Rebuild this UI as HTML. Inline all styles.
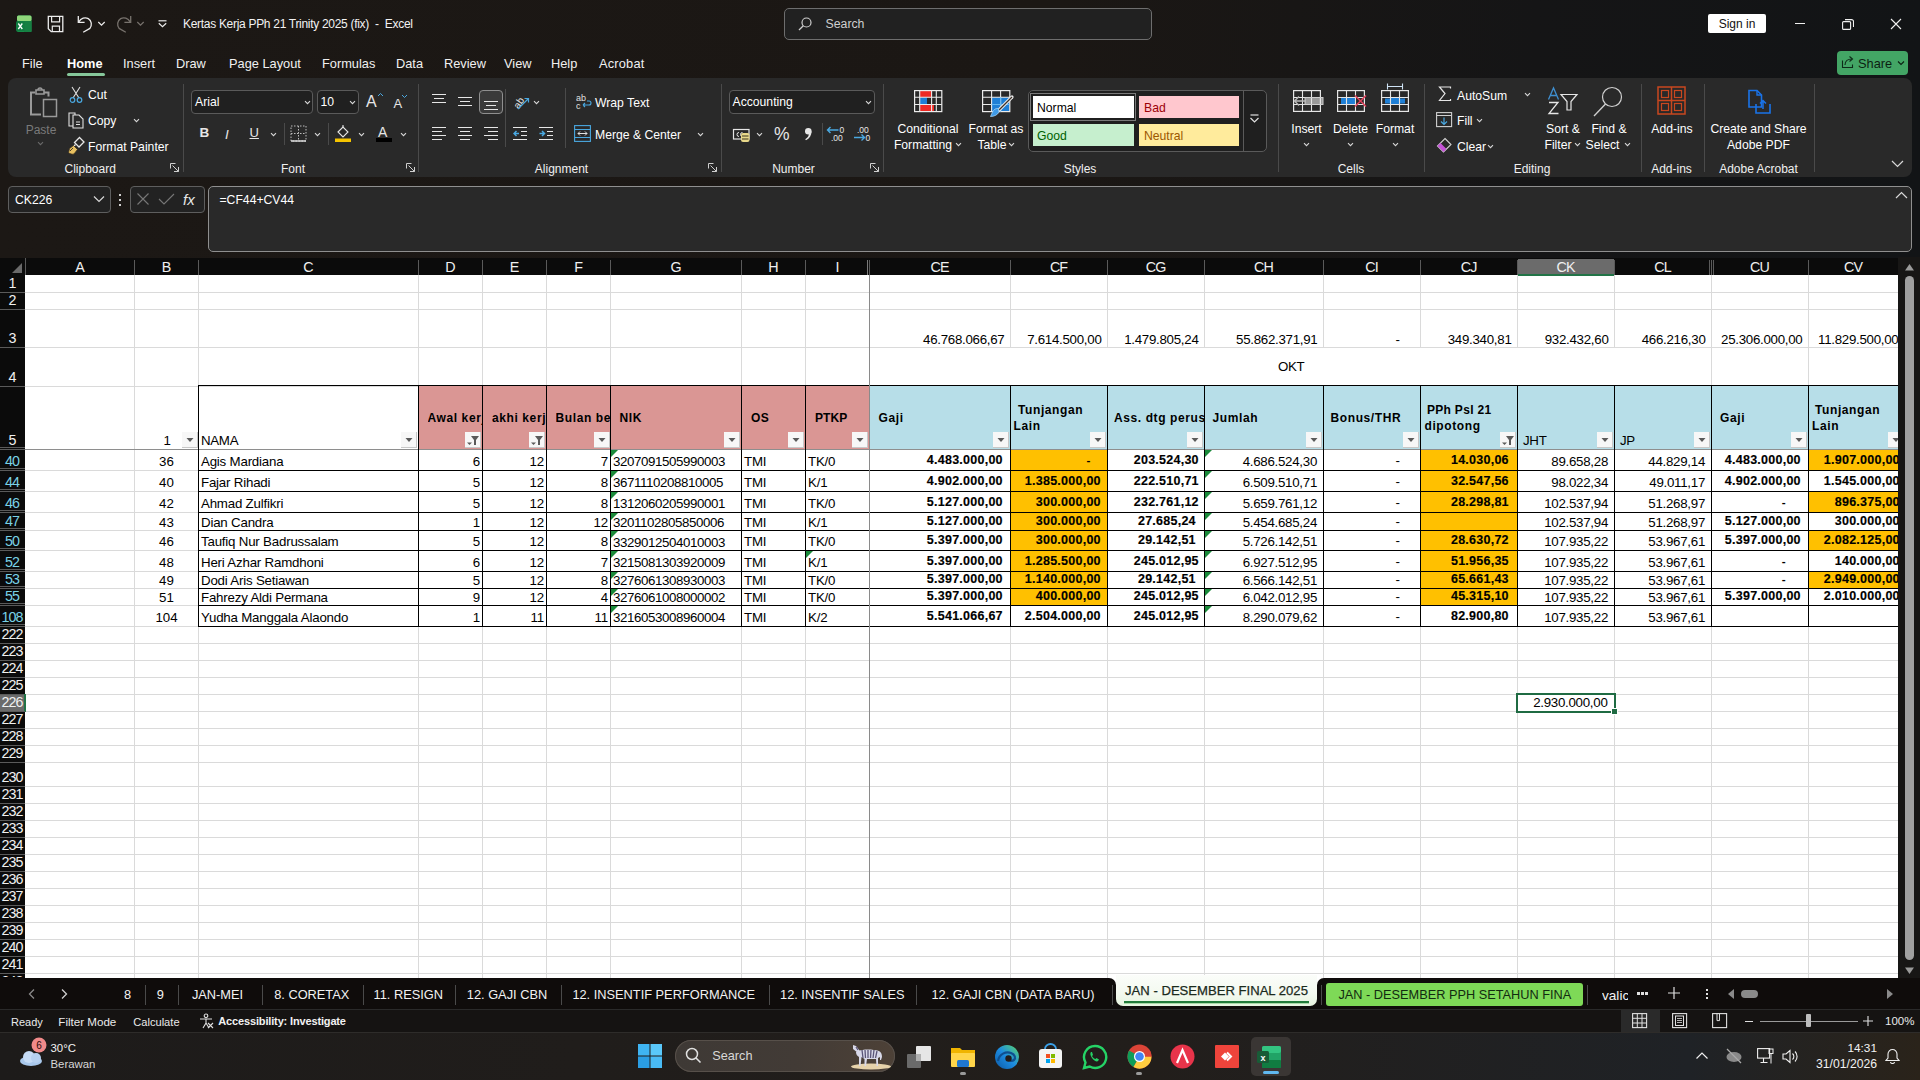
<!DOCTYPE html><html><head><meta charset="utf-8"><title>Excel</title><style>
html,body{margin:0;padding:0;}
body{width:1920px;height:1080px;overflow:hidden;position:relative;background:#0f0d0c;font-family:"Liberation Sans",sans-serif;}
.r{position:absolute;display:block;}
.t{position:absolute;white-space:nowrap;}
.c{position:absolute;overflow:hidden;white-space:nowrap;}
</style></head><body>
<div class="r" style="left:0px;top:0px;width:1920px;height:48px;background:linear-gradient(90deg,#1c1815 0%,#1b1714 55%,#151516 80%,#121416 100%);"></div>
<div class="r" style="left:0px;top:48px;width:1920px;height:30px;background:linear-gradient(90deg,#1c1815 0%,#1b1714 55%,#151516 80%,#121416 100%);"></div>
<div class="r" style="left:0px;top:78px;width:1920px;height:180px;background:linear-gradient(90deg,#1c1815 0%,#1b1714 55%,#151516 80%,#121416 100%);"></div>
<svg class="r" style="left:16px;top:15px;" width="16" height="17" viewBox="0 0 16 17"><rect x="1" y="0.5" width="14.5" height="16.5" rx="1.5" fill="#1f9a50"/><rect x="1" y="0.5" width="14.5" height="5.5" rx="1.5" fill="#8fd67a"/><rect x="8" y="6" width="7.5" height="11" fill="#168043"/><rect x="0" y="6" width="8.5" height="10.5" rx="1.5" fill="#107c41"/><path d="M2.3 8.5l4 5.5M6.3 8.5l-4 5.5" stroke="#fff" stroke-width="1.3"/></svg>
<svg class="r" style="left:47px;top:15px;" width="18" height="18" viewBox="0 0 18 18"><path d="M1.3 1.3h14.5v15.4H4.2L1.3 13.8z" fill="none" stroke="#ececec" stroke-width="1.3"/><path d="M4.6 1.3v5.5h8V1.3" fill="none" stroke="#ececec" stroke-width="1.2"/><path d="M5.3 16.7v-5.6h7.2v5.6" fill="none" stroke="#ececec" stroke-width="1.2"/></svg>
<svg class="r" style="left:77px;top:15px;" width="16" height="18" viewBox="0 0 16 18"><path d="M1.3 1v6.3h6.3" fill="none" stroke="#ececec" stroke-width="1.3"/><path d="M1.8 6.8C4 3.2 8 1.8 11.3 3.6c3.5 2 3.9 6.8 1.6 9.8L6.2 17.3" fill="none" stroke="#ececec" stroke-width="1.3"/></svg>
<svg class="r" style="left:97px;top:20px;" width="9" height="7" viewBox="0 0 9 7"><path d="M1.3 2l3.2 3.2L7.7 2" fill="none" stroke="#ececec" stroke-width="1.2"/></svg>
<svg class="r" style="left:116px;top:15px;" width="16" height="18" viewBox="0 0 16 18"><path d="M14.7 1v6.3H8.4" fill="none" stroke="#77726d" stroke-width="1.3"/><path d="M14.2 6.8C12 3.2 8 1.8 4.7 3.6c-3.5 2-3.9 6.8-1.6 9.8l6.7 3.9" fill="none" stroke="#77726d" stroke-width="1.3"/></svg>
<svg class="r" style="left:136px;top:20px;" width="9" height="7" viewBox="0 0 9 7"><path d="M1.3 2l3.2 3.2L7.7 2" fill="none" stroke="#77726d" stroke-width="1.2"/></svg>
<svg class="r" style="left:157px;top:18px;" width="11" height="11" viewBox="0 0 11 11"><path d="M1.5 2.8h8" stroke="#ececec" stroke-width="1.2"/><path d="M1.8 5.3l3.7 3.3 3.7-3.3" fill="none" stroke="#ececec" stroke-width="1.2"/></svg>
<div class="t" style="top:17.34px;font-size:12px;line-height:15.0px;color:#f2f2f2;letter-spacing:-0.3px;left:183px;white-space:pre;">Kertas Kerja PPh 21 Trinity 2025 (fix)  -  Excel</div>
<div class="r" style="left:784px;top:8px;width:368px;height:32px;background:#212121;border:1px solid #6e6e6e;border-radius:5px;box-sizing:border-box;"></div>
<svg class="r" style="left:797px;top:16px;" width="16" height="16" viewBox="0 0 16 16"><circle cx="9.5" cy="6.5" r="4.5" fill="none" stroke="#cfcfcf" stroke-width="1.2"/><path d="M6.3 9.7L2 14" stroke="#cfcfcf" stroke-width="1.3"/></svg>
<div class="t" style="top:16.55px;font-size:12.3px;line-height:15.38px;color:#cfcfcf;left:825.5px;">Search</div>
<div class="r" style="left:1708px;top:14px;width:58px;height:19px;background:#ffffff;border-radius:2px;"></div>
<div class="t" style="top:16.84px;font-size:12px;line-height:15.0px;color:#111;left:1708.0px;width:58px;text-align:center;">Sign in</div>
<div class="r" style="left:1795px;top:23px;width:10px;height:1px;background:#f0f0f0;"></div>
<svg class="r" style="left:1842px;top:19px;" width="12" height="11" viewBox="0 0 12 11"><rect x="0.6" y="2.6" width="8" height="7.8" rx="1" fill="none" stroke="#f0f0f0" stroke-width="1.1"/><path d="M3 0.6h6.5a2 2 0 0 1 2 2V8" fill="none" stroke="#f0f0f0" stroke-width="1.1"/></svg>
<svg class="r" style="left:1890px;top:18px;" width="12" height="12" viewBox="0 0 12 12"><path d="M1 1l10 10M11 1L1 11" stroke="#f0f0f0" stroke-width="1.1"/></svg>
<div class="t" style="top:55.56px;font-size:12.8px;line-height:16.0px;color:#f0f0f0;letter-spacing:0px;left:22px;">File</div>
<div class="t" style="top:55.56px;font-size:12.8px;line-height:16.0px;color:#ffffff;font-weight:bold;left:67px;">Home</div>
<div class="t" style="top:55.56px;font-size:12.8px;line-height:16.0px;color:#f0f0f0;letter-spacing:0px;left:123px;">Insert</div>
<div class="t" style="top:55.56px;font-size:12.8px;line-height:16.0px;color:#f0f0f0;letter-spacing:0px;left:176px;">Draw</div>
<div class="t" style="top:55.56px;font-size:12.8px;line-height:16.0px;color:#f0f0f0;letter-spacing:0px;left:229px;">Page Layout</div>
<div class="t" style="top:55.56px;font-size:12.8px;line-height:16.0px;color:#f0f0f0;letter-spacing:0px;left:322px;">Formulas</div>
<div class="t" style="top:55.56px;font-size:12.8px;line-height:16.0px;color:#f0f0f0;letter-spacing:0px;left:396px;">Data</div>
<div class="t" style="top:55.56px;font-size:12.8px;line-height:16.0px;color:#f0f0f0;letter-spacing:0px;left:444px;">Review</div>
<div class="t" style="top:55.56px;font-size:12.8px;line-height:16.0px;color:#f0f0f0;letter-spacing:0px;left:504px;">View</div>
<div class="t" style="top:55.56px;font-size:12.8px;line-height:16.0px;color:#f0f0f0;letter-spacing:0px;left:551px;">Help</div>
<div class="t" style="top:55.56px;font-size:12.8px;line-height:16.0px;color:#f0f0f0;letter-spacing:0.2px;left:599px;">Acrobat</div>
<div class="r" style="left:67px;top:73px;width:38px;height:3px;background:#86c79a;border-radius:2px;"></div>
<div class="r" style="left:1837px;top:51px;width:71px;height:24px;background:#43a565;border-radius:4px;"></div>
<svg class="r" style="left:1841px;top:55px;" width="13" height="14" viewBox="0 0 13 14"><path d="M1.5 5.5v7h10v-3" fill="none" stroke="#0e2a18" stroke-width="1.1"/><path d="M4 10c0-4 3-6 7-6" fill="none" stroke="#0e2a18" stroke-width="1.1"/><path d="M8.5 1.5l3 2.5-3 2.5" fill="none" stroke="#0e2a18" stroke-width="1.1"/></svg>
<div class="t" style="top:55.56px;font-size:12.8px;line-height:16.0px;color:#0c1f12;left:1858px;">Share</div>
<svg class="r" style="left:1897px;top:60px;" width="8" height="6" viewBox="0 0 8 6"><path d="M1 1.5l3 3 3-3" fill="none" stroke="#0c1f12" stroke-width="1.1"/></svg>
<div class="r" style="left:8px;top:78px;width:1904px;height:99px;background:#292929;border-radius:8px;"></div>
<svg class="r" style="left:28px;top:85px;" width="31" height="34" viewBox="0 0 31 34"><path d="M7 7.5H3v22h10" fill="none" stroke="#9a9a9a" stroke-width="2"/><path d="M16 7.5h4.5v4" fill="none" stroke="#9a9a9a" stroke-width="2"/><path d="M8 5h8v4H8z" fill="none" stroke="#9a9a9a" stroke-width="1.6"/><path d="M10 5a2 2 0 0 1 4 0" fill="none" stroke="#9a9a9a" stroke-width="1.4"/><rect x="15.5" y="14.5" width="13" height="17" fill="#292929" stroke="#9a9a9a" stroke-width="1.5"/></svg>
<div class="t" style="top:122.54px;font-size:12px;line-height:15.0px;color:#7a7a7a;left:11.0px;width:60px;text-align:center;">Paste</div>
<svg class="r" style="left:36.5px;top:139.5px;" width="7" height="7" viewBox="0 0 7 7"><path d="M1 2.2l2.5 2.5 2.5 -2.5" fill="none" stroke="#6a6a6a" stroke-width="1.1"/></svg>
<svg class="r" style="left:69px;top:86px;" width="14" height="17" viewBox="0 0 14 17"><path d="M3 1l7 11M11 1L4 12" stroke="#e0e0e0" stroke-width="1.1"/><circle cx="3.5" cy="14" r="2.3" fill="none" stroke="#4aa8e0" stroke-width="1.2"/><circle cx="10.5" cy="14" r="2.3" fill="none" stroke="#4aa8e0" stroke-width="1.2"/></svg>
<div class="t" style="top:87.85px;font-size:12.2px;line-height:15.25px;color:#ffffff;left:88px;">Cut</div>
<svg class="r" style="left:68px;top:111px;" width="17" height="18" viewBox="0 0 17 18"><path d="M1 2h6v13h-6z" fill="none" stroke="#e0e0e0" stroke-width="1.1"/><path d="M5 4h6l4 4v9H5z" fill="#292929" stroke="#e0e0e0" stroke-width="1.1"/><path d="M8 11h4M8 13.5h4" stroke="#e0e0e0" stroke-width="1"/></svg>
<div class="t" style="top:114.35px;font-size:12.2px;line-height:15.25px;color:#ffffff;left:88px;">Copy</div>
<svg class="r" style="left:132.5px;top:116.5px;" width="7" height="7" viewBox="0 0 7 7"><path d="M1 2.2l2.5 2.5 2.5 -2.5" fill="none" stroke="#d8d8d8" stroke-width="1.1"/></svg>
<svg class="r" style="left:67px;top:136px;" width="19" height="19" viewBox="0 0 19 19"><path d="M12.5 1.5l4.5 4.5-5 5-4.5-4.5z" fill="none" stroke="#e8e8e8" stroke-width="1.3"/><path d="M8.5 8.5L5 12" stroke="#e8e8e8" stroke-width="1.3"/><path d="M6.5 9.5l4 4-3.5 4.5c-2 0.5-4 0-5.5-1.5l1-4z" fill="#e8c060" stroke="#3a3020" stroke-width="0.8"/><path d="M3 15l3-3" stroke="#3a3020" stroke-width="0.9"/></svg>
<div class="t" style="top:139.85px;font-size:12.2px;line-height:15.25px;color:#ffffff;left:88px;">Format Painter</div>
<div class="t" style="top:161.84px;font-size:12px;line-height:15.0px;color:#f0f0f0;left:64.5px;">Clipboard</div>
<svg class="r" style="left:170px;top:163px;" width="10" height="10" viewBox="0 0 10 10"><path d="M0.5 0.5h5M0.5 0.5v5" stroke="#cfcfcf" stroke-width="1"/><path d="M2.5 2.5l6 6M8.5 4v4.5H4" fill="none" stroke="#cfcfcf" stroke-width="1"/></svg>
<div class="r" style="left:183px;top:84px;width:1px;height:88px;background:#4a4a4a;"></div>
<div class="r" style="left:191px;top:90px;width:122px;height:24px;background:#202020;border:1px solid #5a5a5a;border-radius:4px;box-sizing:border-box;"></div>
<div class="t" style="top:94.65px;font-size:12.2px;line-height:15.25px;color:#ffffff;left:195px;">Arial</div>
<svg class="r" style="left:303.5px;top:98.5px;" width="7" height="7" viewBox="0 0 7 7"><path d="M1 2.2l2.5 2.5 2.5 -2.5" fill="none" stroke="#d8d8d8" stroke-width="1.1"/></svg>
<div class="r" style="left:317px;top:90px;width:42px;height:24px;background:#202020;border:1px solid #5a5a5a;border-radius:4px;box-sizing:border-box;"></div>
<div class="t" style="top:94.65px;font-size:12.2px;line-height:15.25px;color:#ffffff;left:320.5px;">10</div>
<svg class="r" style="left:348.5px;top:98.5px;" width="7" height="7" viewBox="0 0 7 7"><path d="M1 2.2l2.5 2.5 2.5 -2.5" fill="none" stroke="#d8d8d8" stroke-width="1.1"/></svg>
<div class="t" style="top:91.66px;font-size:16px;line-height:20.0px;color:#e6e6e6;left:366px;">A</div>
<svg class="r" style="left:377px;top:92px;" width="7" height="5" viewBox="0 0 7 5"><path d="M1 4l2.5-2.5L6 4" fill="none" stroke="#4aa8e0" stroke-width="1"/></svg>
<div class="t" style="top:95.57px;font-size:13px;line-height:16.25px;color:#e6e6e6;left:393.5px;">A</div>
<svg class="r" style="left:401px;top:94px;" width="7" height="5" viewBox="0 0 7 5"><path d="M1 1l2.5 2.5L6 1" fill="none" stroke="#4aa8e0" stroke-width="1"/></svg>
<div class="t" style="top:125.38px;font-size:13.5px;line-height:16.88px;color:#e6e6e6;font-weight:bold;left:199.5px;">B</div>
<div class="t" style="top:126.58px;font-size:13.5px;line-height:16.88px;color:#e6e6e6;left:225px;font-style:italic;font-family:"Liberation Serif",serif;">I</div>
<div class="t" style="top:124.87px;font-size:13px;line-height:16.25px;color:#e6e6e6;left:249.5px;text-decoration:underline;">U</div>
<svg class="r" style="left:270.0px;top:130.5px;" width="7" height="7" viewBox="0 0 7 7"><path d="M1 2.2l2.5 2.5 2.5 -2.5" fill="none" stroke="#d8d8d8" stroke-width="1.1"/></svg>
<div class="r" style="left:284px;top:123px;width:1px;height:22px;background:#4a4a4a;"></div>
<svg class="r" style="left:290px;top:125px;" width="17" height="17" viewBox="0 0 17 17"><rect x="1" y="1" width="15" height="15" fill="none" stroke="#bdbdbd" stroke-width="1" stroke-dasharray="1.5 1.5"/><path d="M8.5 1v15M1 8.5h15" stroke="#bdbdbd" stroke-width="1" stroke-dasharray="1.5 1.5"/><path d="M1 16h15" stroke="#e6e6e6" stroke-width="1.4"/></svg>
<svg class="r" style="left:313.5px;top:130.5px;" width="7" height="7" viewBox="0 0 7 7"><path d="M1 2.2l2.5 2.5 2.5 -2.5" fill="none" stroke="#d8d8d8" stroke-width="1.1"/></svg>
<div class="r" style="left:328px;top:123px;width:1px;height:22px;background:#4a4a4a;"></div>
<svg class="r" style="left:334px;top:124px;" width="18" height="19" viewBox="0 0 18 19"><path d="M4 8l5-5 5 5-5 5z" fill="none" stroke="#e6e6e6" stroke-width="1.1"/><path d="M9 3V1" stroke="#e6e6e6" stroke-width="1.1"/><rect x="1" y="14.5" width="16" height="3.5" fill="#f5c400"/></svg>
<svg class="r" style="left:358.0px;top:130.5px;" width="7" height="7" viewBox="0 0 7 7"><path d="M1 2.2l2.5 2.5 2.5 -2.5" fill="none" stroke="#d8d8d8" stroke-width="1.1"/></svg>
<div class="t" style="top:123.60px;font-size:14px;line-height:17.5px;color:#e6e6e6;left:378px;">A</div>
<div class="r" style="left:376px;top:137.6px;width:16px;height:4.3px;background:#000;"></div>
<svg class="r" style="left:399.5px;top:130.5px;" width="7" height="7" viewBox="0 0 7 7"><path d="M1 2.2l2.5 2.5 2.5 -2.5" fill="none" stroke="#d8d8d8" stroke-width="1.1"/></svg>
<div class="t" style="top:161.84px;font-size:12px;line-height:15.0px;color:#f0f0f0;left:263.0px;width:60px;text-align:center;">Font</div>
<svg class="r" style="left:406px;top:163px;" width="10" height="10" viewBox="0 0 10 10"><path d="M0.5 0.5h5M0.5 0.5v5" stroke="#cfcfcf" stroke-width="1"/><path d="M2.5 2.5l6 6M8.5 4v4.5H4" fill="none" stroke="#cfcfcf" stroke-width="1"/></svg>
<div class="r" style="left:418px;top:84px;width:1px;height:88px;background:#4a4a4a;"></div>
<div class="r" style="left:432px;top:93.6px;width:14px;height:1.4px;background:#e6e6e6;"></div>
<div class="r" style="left:434px;top:97.7px;width:10px;height:1.4px;background:#e6e6e6;"></div>
<div class="r" style="left:432px;top:101.7px;width:14px;height:1.4px;background:#e6e6e6;"></div>
<div class="r" style="left:458px;top:96.8px;width:14px;height:1.4px;background:#e6e6e6;"></div>
<div class="r" style="left:460px;top:100.8px;width:10px;height:1.4px;background:#e6e6e6;"></div>
<div class="r" style="left:458px;top:104.8px;width:14px;height:1.4px;background:#e6e6e6;"></div>
<div class="r" style="left:479px;top:90px;width:24px;height:24px;background:#3a3a3a;border:1px solid #8f8f8f;border-radius:4px;box-sizing:border-box;"></div>
<div class="r" style="left:484px;top:100.8px;width:14px;height:1.4px;background:#e6e6e6;"></div>
<div class="r" style="left:486px;top:104.8px;width:10px;height:1.4px;background:#e6e6e6;"></div>
<div class="r" style="left:484px;top:108.8px;width:14px;height:1.4px;background:#e6e6e6;"></div>
<svg class="r" style="left:511px;top:92px;" width="20" height="20" viewBox="0 0 20 20"><text x="2" y="15" font-size="10" fill="#e6e6e6" transform="rotate(-55 7 11)" font-family="Liberation Sans">ab</text><path d="M7 17L17 7M13.5 6.5h4v4" fill="none" stroke="#4aa8e0" stroke-width="1.2"/></svg>
<svg class="r" style="left:533.0px;top:99.0px;" width="7" height="7" viewBox="0 0 7 7"><path d="M1 2.2l2.5 2.5 2.5 -2.5" fill="none" stroke="#d8d8d8" stroke-width="1.1"/></svg>
<div class="r" style="left:432px;top:126.8px;width:14px;height:1.4px;background:#e6e6e6;"></div>
<div class="r" style="left:458px;top:126.8px;width:14px;height:1.4px;background:#e6e6e6;"></div>
<div class="r" style="left:484px;top:126.8px;width:14px;height:1.4px;background:#e6e6e6;"></div>
<div class="r" style="left:432px;top:130.8px;width:10px;height:1.4px;background:#e6e6e6;"></div>
<div class="r" style="left:460px;top:130.8px;width:10px;height:1.4px;background:#e6e6e6;"></div>
<div class="r" style="left:488px;top:130.8px;width:10px;height:1.4px;background:#e6e6e6;"></div>
<div class="r" style="left:432px;top:134.8px;width:14px;height:1.4px;background:#e6e6e6;"></div>
<div class="r" style="left:458px;top:134.8px;width:14px;height:1.4px;background:#e6e6e6;"></div>
<div class="r" style="left:484px;top:134.8px;width:14px;height:1.4px;background:#e6e6e6;"></div>
<div class="r" style="left:432px;top:138.8px;width:10px;height:1.4px;background:#e6e6e6;"></div>
<div class="r" style="left:460px;top:138.8px;width:10px;height:1.4px;background:#e6e6e6;"></div>
<div class="r" style="left:488px;top:138.8px;width:10px;height:1.4px;background:#e6e6e6;"></div>
<div class="r" style="left:505px;top:89px;width:1px;height:58px;background:#4a4a4a;"></div>
<div class="r" style="left:513px;top:126.8px;width:14px;height:1.4px;background:#e6e6e6;"></div>
<div class="r" style="left:521px;top:130.8px;width:6px;height:1.4px;background:#e6e6e6;"></div>
<div class="r" style="left:521px;top:134.8px;width:6px;height:1.4px;background:#e6e6e6;"></div>
<div class="r" style="left:513px;top:138.8px;width:14px;height:1.4px;background:#e6e6e6;"></div>
<svg class="r" style="left:513px;top:126px;" width="8" height="15" viewBox="0 0 8 15"><path d="M6 7.5H1M3.5 5l-2.5 2.5 2.5 2.5" fill="none" stroke="#4aa8e0" stroke-width="1.5"/></svg>
<div class="r" style="left:539px;top:126.8px;width:14px;height:1.4px;background:#e6e6e6;"></div>
<div class="r" style="left:547px;top:130.8px;width:6px;height:1.4px;background:#e6e6e6;"></div>
<div class="r" style="left:547px;top:134.8px;width:6px;height:1.4px;background:#e6e6e6;"></div>
<div class="r" style="left:539px;top:138.8px;width:14px;height:1.4px;background:#e6e6e6;"></div>
<svg class="r" style="left:539px;top:126px;" width="8" height="15" viewBox="0 0 8 15"><path d="M0.5 7.5H5.5M3 5l2.5 2.5L3 10" fill="none" stroke="#4aa8e0" stroke-width="1.5"/></svg>
<div class="r" style="left:565px;top:88px;width:1px;height:60px;background:#4a4a4a;"></div>
<svg class="r" style="left:576px;top:93px;" width="16" height="17" viewBox="0 0 16 17"><text x="0" y="8" font-size="9" fill="#e0e0e0" font-family="Liberation Sans">ab</text><text x="0" y="16" font-size="9" fill="#e0e0e0" font-family="Liberation Sans">c</text><path d="M7 12h6a2 2 0 0 0 0-4h-2M7 12l2-2M7 12l2 2" fill="none" stroke="#4aa8e0" stroke-width="1.1"/></svg>
<div class="t" style="top:95.85px;font-size:12.2px;line-height:15.25px;color:#ffffff;left:595px;">Wrap Text</div>
<svg class="r" style="left:574px;top:125px;" width="17" height="17" viewBox="0 0 17 17"><rect x="0.6" y="0.6" width="15.8" height="15.8" fill="none" stroke="#4aa8e0" stroke-width="1.1"/><path d="M0.6 4.5h16M0.6 12.5h16" stroke="#4aa8e0" stroke-width="1"/><path d="M4 8.5h9M6 6.5l-2 2 2 2M11 6.5l2 2-2 2" fill="none" stroke="#e0e0e0" stroke-width="1"/></svg>
<div class="t" style="top:128.35px;font-size:12.2px;line-height:15.25px;color:#ffffff;left:595px;">Merge &amp; Center</div>
<svg class="r" style="left:697.0px;top:130.5px;" width="7" height="7" viewBox="0 0 7 7"><path d="M1 2.2l2.5 2.5 2.5 -2.5" fill="none" stroke="#d8d8d8" stroke-width="1.1"/></svg>
<div class="t" style="top:161.84px;font-size:12px;line-height:15.0px;color:#f0f0f0;left:511.5px;width:100px;text-align:center;">Alignment</div>
<svg class="r" style="left:707.5px;top:163px;" width="10" height="10" viewBox="0 0 10 10"><path d="M0.5 0.5h5M0.5 0.5v5" stroke="#cfcfcf" stroke-width="1"/><path d="M2.5 2.5l6 6M8.5 4v4.5H4" fill="none" stroke="#cfcfcf" stroke-width="1"/></svg>
<div class="r" style="left:721px;top:84px;width:1px;height:88px;background:#4a4a4a;"></div>
<div class="r" style="left:729px;top:90px;width:146px;height:24px;background:#202020;border:1px solid #5a5a5a;border-radius:4px;box-sizing:border-box;"></div>
<div class="t" style="top:94.65px;font-size:12.2px;line-height:15.25px;color:#ffffff;left:732.5px;">Accounting</div>
<svg class="r" style="left:864.5px;top:98.5px;" width="7" height="7" viewBox="0 0 7 7"><path d="M1 2.2l2.5 2.5 2.5 -2.5" fill="none" stroke="#d8d8d8" stroke-width="1.1"/></svg>
<svg class="r" style="left:732px;top:128px;" width="19" height="15" viewBox="0 0 19 15"><rect x="1.5" y="1.5" width="15.5" height="9.5" fill="none" stroke="#e6e6e6" stroke-width="1.2"/><path d="M7 4.5a2 2 0 1 0 0 4M10.5 4.5a2 2 0 1 0 0 4" fill="none" stroke="#e6e6e6" stroke-width="1"/><rect x="9" y="5" width="8.5" height="9" rx="2" fill="#e8d88a"/><path d="M10 8h6.5M10 11h6.5" stroke="#3a3520" stroke-width="1"/></svg>
<svg class="r" style="left:756.0px;top:130.5px;" width="7" height="7" viewBox="0 0 7 7"><path d="M1 2.2l2.5 2.5 2.5 -2.5" fill="none" stroke="#d8d8d8" stroke-width="1.1"/></svg>
<div class="t" style="top:124.00px;font-size:17.5px;line-height:21.88px;color:#e6e6e6;left:774px;">%</div>
<svg class="r" style="left:803px;top:127px;" width="11" height="14" viewBox="0 0 11 14"><circle cx="5.3" cy="4.3" r="3.3" fill="#e6e6e6"/><path d="M8.5 4.5c0 4-2 7-5.5 8.8l-0.8-1c2.5-1.5 3.8-3.5 3.8-6.3z" fill="#e6e6e6"/></svg>
<div class="r" style="left:822px;top:123px;width:1px;height:22px;background:#4a4a4a;"></div>
<svg class="r" style="left:826px;top:125px;" width="20" height="18" viewBox="0 0 20 18"><text x="13.5" y="7.5" font-size="8.5" fill="#e6e6e6" font-family="Liberation Sans">0</text><text x="5" y="15.8" font-size="8.5" fill="#e6e6e6" font-family="Liberation Sans">.00</text><path d="M12.5 5H1.5M4.5 2l-3 3 3 3" fill="none" stroke="#4aa8e0" stroke-width="1.4"/></svg>
<svg class="r" style="left:852px;top:125px;" width="20" height="18" viewBox="0 0 20 18"><text x="5" y="7.5" font-size="8.5" fill="#e6e6e6" font-family="Liberation Sans">.00</text><text x="13.5" y="15.8" font-size="8.5" fill="#e6e6e6" font-family="Liberation Sans">0</text><path d="M2 12.5h10.5M9.5 9.5l3 3-3 3" fill="none" stroke="#4aa8e0" stroke-width="1.4"/></svg>
<div class="t" style="top:161.84px;font-size:12px;line-height:15.0px;color:#f0f0f0;left:753.5px;width:80px;text-align:center;">Number</div>
<svg class="r" style="left:870px;top:163px;" width="10" height="10" viewBox="0 0 10 10"><path d="M0.5 0.5h5M0.5 0.5v5" stroke="#cfcfcf" stroke-width="1"/><path d="M2.5 2.5l6 6M8.5 4v4.5H4" fill="none" stroke="#cfcfcf" stroke-width="1"/></svg>
<div class="r" style="left:882.5px;top:84px;width:1px;height:88px;background:#4a4a4a;"></div>
<svg class="r" style="left:913px;top:89px;" width="31" height="24" viewBox="0 0 31 24"><rect x="7" y="1.6" width="12" height="6.8" fill="#ee2a24"/><rect x="7" y="8.4" width="7" height="7.2" fill="#1e7fd6"/><rect x="7" y="15.6" width="14" height="7" fill="#ee2a24"/><rect x="1.6" y="1.6" width="27.2" height="21" fill="none" stroke="#ececec" stroke-width="1.2"/><path d="M6.7 1.6v21M18.6 1.6v21M23.3 1.6v21M1.6 8.3h27.2M1.6 15.5h27.2" stroke="#ececec" stroke-width="1.1"/></svg>
<div class="t" style="top:121.85px;font-size:12.2px;line-height:15.25px;color:#ffffff;left:883.0px;width:90px;text-align:center;">Conditional</div>
<div class="t" style="top:137.85px;font-size:12.2px;line-height:15.25px;color:#ffffff;left:878.0px;width:90px;text-align:center;">Formatting</div>
<svg class="r" style="left:954.5px;top:140.5px;" width="7" height="7" viewBox="0 0 7 7"><path d="M1 2.2l2.5 2.5 2.5 -2.5" fill="none" stroke="#d8d8d8" stroke-width="1.1"/></svg>
<svg class="r" style="left:981px;top:89px;" width="34" height="30" viewBox="0 0 34 30"><rect x="10.6" y="8.3" width="18" height="14.4" fill="#1e7fd6"/><rect x="1.6" y="1.6" width="27.2" height="21" fill="none" stroke="#ececec" stroke-width="1.2"/><path d="M10.6 1.6v21M19.6 1.6v21M1.6 8.3h27.2M1.6 15.5h27.2" stroke="#ececec" stroke-width="1.1"/><path d="M19.6 8.3v14.4M10.6 15.5h18" stroke="#5fb4f0" stroke-width="1"/><path d="M31 8L18 21" stroke="#ececec" stroke-width="3.2" stroke-linecap="round"/><path d="M31 8L18 21" stroke="#3a3028" stroke-width="1.2"/><path d="M17.5 19.5c-2.5-0.5-5 1-6 3.5l-2 4.5c3.5 0 7-1.5 8.5-4.5z" fill="#3f9be8" stroke="#9fd0f5" stroke-width="0.8"/></svg>
<div class="t" style="top:121.85px;font-size:12.2px;line-height:15.25px;color:#ffffff;left:951.0px;width:90px;text-align:center;">Format as</div>
<div class="t" style="top:137.85px;font-size:12.2px;line-height:15.25px;color:#ffffff;left:947.0px;width:90px;text-align:center;">Table</div>
<svg class="r" style="left:1007.5px;top:140.5px;" width="7" height="7" viewBox="0 0 7 7"><path d="M1 2.2l2.5 2.5 2.5 -2.5" fill="none" stroke="#d8d8d8" stroke-width="1.1"/></svg>
<div class="r" style="left:1028px;top:90px;width:239px;height:62px;background:#1f1f1f;border:1px solid #5a5a5a;border-radius:5px;box-sizing:border-box;"></div>
<div class="r" style="left:1030px;top:93px;width:106px;height:28px;background:#1f1f1f;border:1px solid #7a7a7a;box-sizing:border-box;"></div>
<div class="r" style="left:1033px;top:96px;width:101px;height:22px;background:#ffffff;"></div>
<div class="t" style="top:100.85px;font-size:12.2px;line-height:15.25px;color:#000;left:1037px;">Normal</div>
<div class="r" style="left:1139px;top:96px;width:100px;height:22px;background:#ffc7ce;"></div>
<div class="t" style="top:100.85px;font-size:12.2px;line-height:15.25px;color:#9c0006;left:1144px;">Bad</div>
<div class="r" style="left:1033px;top:124px;width:101px;height:22px;background:#c6efce;"></div>
<div class="t" style="top:128.85px;font-size:12.2px;line-height:15.25px;color:#006100;left:1037px;">Good</div>
<div class="r" style="left:1139px;top:124px;width:100px;height:22px;background:#ffeb9c;"></div>
<div class="t" style="top:128.85px;font-size:12.2px;line-height:15.25px;color:#9c5700;left:1144px;">Neutral</div>
<div class="r" style="left:1243px;top:91px;width:1px;height:60px;background:#5a5a5a;"></div>
<svg class="r" style="left:1249px;top:114px;" width="11" height="10" viewBox="0 0 11 10"><path d="M1.5 1h8" stroke="#e0e0e0" stroke-width="1.2"/><path d="M1.5 4l4 4 4-4" fill="none" stroke="#e0e0e0" stroke-width="1.2"/></svg>
<div class="t" style="top:161.84px;font-size:12px;line-height:15.0px;color:#f0f0f0;left:1040.0px;width:80px;text-align:center;">Styles</div>
<div class="r" style="left:1277.5px;top:84px;width:1px;height:88px;background:#4a4a4a;"></div>
<svg class="r" style="left:1293px;top:90px;" width="32" height="24" viewBox="0 0 32 24"><rect x="12" y="7.5" width="18" height="7" fill="#9a9a9a"/><rect x="0.6" y="0.6" width="26.8" height="20.8" fill="none" stroke="#e6e6e6" stroke-width="1.2"/><path d="M9.5 0.6v20.8M18.5 0.6v20.8M0.6 7.5h26.8M0.6 14.5h26.8" stroke="#e6e6e6" stroke-width="1.1"/><rect x="12" y="7.5" width="18" height="7" fill="none" stroke="#cfcfcf" stroke-width="1"/><path d="M13 11H1.5M6 6.5L1.5 11 6 15.5" fill="none" stroke="#b8b8b8" stroke-width="1.4"/></svg>
<div class="t" style="top:121.85px;font-size:12.2px;line-height:15.25px;color:#ffffff;left:1276.5px;width:60px;text-align:center;">Insert</div>
<svg class="r" style="left:1303.0px;top:140.5px;" width="7" height="7" viewBox="0 0 7 7"><path d="M1 2.2l2.5 2.5 2.5 -2.5" fill="none" stroke="#d8d8d8" stroke-width="1.1"/></svg>
<svg class="r" style="left:1337px;top:90px;" width="32" height="24" viewBox="0 0 32 24"><rect x="4" y="7.5" width="15" height="7" fill="#1e7fd6"/><rect x="0.6" y="0.6" width="26.8" height="20.8" fill="none" stroke="#e6e6e6" stroke-width="1.2"/><path d="M9.5 0.6v20.8M18.5 0.6v20.8M0.6 7.5h26.8M0.6 14.5h26.8" stroke="#e6e6e6" stroke-width="1.1"/><path d="M18 5.5l11 11M29 5.5L18 16.5" stroke="#e0405a" stroke-width="1.6"/></svg>
<div class="t" style="top:121.85px;font-size:12.2px;line-height:15.25px;color:#ffffff;left:1320.5px;width:60px;text-align:center;">Delete</div>
<svg class="r" style="left:1347.0px;top:140.5px;" width="7" height="7" viewBox="0 0 7 7"><path d="M1 2.2l2.5 2.5 2.5 -2.5" fill="none" stroke="#d8d8d8" stroke-width="1.1"/></svg>
<svg class="r" style="left:1381px;top:90px;" width="32" height="24" viewBox="0 0 32 24"><rect x="9.5" y="7.5" width="9" height="7" fill="#1e7fd6"/><rect x="4" y="8.5" width="20" height="5" fill="#1e7fd6"/><rect x="0.6" y="0.6" width="26.8" height="20.8" fill="none" stroke="#e6e6e6" stroke-width="1.2"/><path d="M9.5 0.6v20.8M18.5 0.6v20.8M0.6 7.5h26.8M0.6 14.5h26.8" stroke="#e6e6e6" stroke-width="1.1"/></svg>
<svg class="r" style="left:1386px;top:83px;" width="18" height="7" viewBox="0 0 18 7"><path d="M1.5 3.5h15M1.5 0.5v6M16.5 0.5v6" stroke="#cfe3f5" stroke-width="1.1"/></svg>
<div class="t" style="top:121.85px;font-size:12.2px;line-height:15.25px;color:#ffffff;left:1365.0px;width:60px;text-align:center;">Format</div>
<svg class="r" style="left:1391.5px;top:140.5px;" width="7" height="7" viewBox="0 0 7 7"><path d="M1 2.2l2.5 2.5 2.5 -2.5" fill="none" stroke="#d8d8d8" stroke-width="1.1"/></svg>
<div class="t" style="top:161.84px;font-size:12px;line-height:15.0px;color:#f0f0f0;left:1321.0px;width:60px;text-align:center;">Cells</div>
<div class="r" style="left:1424px;top:84px;width:1px;height:88px;background:#4a4a4a;"></div>
<svg class="r" style="left:1438px;top:86px;" width="14" height="16" viewBox="0 0 14 16"><path d="M12.5 2.5V1H1.5l5.5 6.5L1.5 14.5h11V13" fill="none" stroke="#e6e6e6" stroke-width="1.2"/></svg>
<div class="t" style="top:88.85px;font-size:12.2px;line-height:15.25px;color:#ffffff;left:1457px;">AutoSum</div>
<svg class="r" style="left:1524.0px;top:90.5px;" width="7" height="7" viewBox="0 0 7 7"><path d="M1 2.2l2.5 2.5 2.5 -2.5" fill="none" stroke="#d8d8d8" stroke-width="1.1"/></svg>
<svg class="r" style="left:1436px;top:112px;" width="17" height="16" viewBox="0 0 17 16"><rect x="0.6" y="0.6" width="15" height="14" fill="none" stroke="#d0d0d0" stroke-width="1.1"/><path d="M0.6 3.5h15" stroke="#d0d0d0" stroke-width="1"/><path d="M8 5.5v7M5 9.5l3 3 3-3" fill="none" stroke="#4aa8e0" stroke-width="1.2"/></svg>
<div class="t" style="top:114.35px;font-size:12.2px;line-height:15.25px;color:#ffffff;left:1457px;">Fill</div>
<svg class="r" style="left:1475.5px;top:116.5px;" width="7" height="7" viewBox="0 0 7 7"><path d="M1 2.2l2.5 2.5 2.5 -2.5" fill="none" stroke="#d8d8d8" stroke-width="1.1"/></svg>
<svg class="r" style="left:1436px;top:137px;" width="17" height="17" viewBox="0 0 17 17"><path d="M9 1.5l6 6-7.5 7.5-6-6z" fill="none" stroke="#d0d0d0" stroke-width="1.1"/><path d="M4.5 6l6 6-3 3-6-6z" fill="#c452d6"/></svg>
<div class="t" style="top:139.85px;font-size:12.2px;line-height:15.25px;color:#ffffff;left:1457px;">Clear</div>
<svg class="r" style="left:1487.0px;top:142.5px;" width="7" height="7" viewBox="0 0 7 7"><path d="M1 2.2l2.5 2.5 2.5 -2.5" fill="none" stroke="#d8d8d8" stroke-width="1.1"/></svg>
<svg class="r" style="left:1547px;top:86px;" width="32" height="30" viewBox="0 0 32 30"><path d="M1.5 13.5L6.5 2l5 11.5M3.3 9.5h6.4" fill="none" stroke="#3f8fd0" stroke-width="1.3"/><path d="M2 16.5h9L2 27.5h9.5" fill="none" stroke="#e6e6e6" stroke-width="1.3"/><path d="M14 8.5h16l-6 7v8.5h-4v-8.5z" fill="none" stroke="#e6e6e6" stroke-width="1.2"/></svg>
<div class="t" style="top:121.85px;font-size:12.2px;line-height:15.25px;color:#ffffff;left:1533.0px;width:60px;text-align:center;">Sort &amp;</div>
<div class="t" style="top:137.85px;font-size:12.2px;line-height:15.25px;color:#ffffff;left:1528.0px;width:60px;text-align:center;">Filter</div>
<svg class="r" style="left:1573.5px;top:140.5px;" width="7" height="7" viewBox="0 0 7 7"><path d="M1 2.2l2.5 2.5 2.5 -2.5" fill="none" stroke="#d8d8d8" stroke-width="1.1"/></svg>
<svg class="r" style="left:1592px;top:86px;" width="32" height="31" viewBox="0 0 32 31"><circle cx="20" cy="11" r="9.5" fill="none" stroke="#d0d0d0" stroke-width="1.2"/><path d="M13.5 18L2 30" stroke="#d0d0d0" stroke-width="1.3"/></svg>
<div class="t" style="top:121.85px;font-size:12.2px;line-height:15.25px;color:#ffffff;left:1579.0px;width:60px;text-align:center;">Find &amp;</div>
<div class="t" style="top:137.85px;font-size:12.2px;line-height:15.25px;color:#ffffff;left:1572.5px;width:60px;text-align:center;">Select</div>
<svg class="r" style="left:1623.5px;top:140.5px;" width="7" height="7" viewBox="0 0 7 7"><path d="M1 2.2l2.5 2.5 2.5 -2.5" fill="none" stroke="#d8d8d8" stroke-width="1.1"/></svg>
<div class="t" style="top:161.84px;font-size:12px;line-height:15.0px;color:#f0f0f0;left:1492.0px;width:80px;text-align:center;">Editing</div>
<div class="r" style="left:1641px;top:84px;width:1px;height:88px;background:#4a4a4a;"></div>
<svg class="r" style="left:1657px;top:86px;" width="30" height="30" viewBox="0 0 30 30"><rect x="1" y="1" width="27" height="27" fill="none" stroke="#c9471f" stroke-width="1.5"/><path d="M14.5 1v27M1 14.5h27" stroke="#c9471f" stroke-width="1.5"/><rect x="4.5" y="4.5" width="7" height="7" fill="none" stroke="#c9471f" stroke-width="1.2"/><rect x="17.5" y="4.5" width="7" height="7" fill="none" stroke="#c9471f" stroke-width="1.2"/><rect x="4.5" y="17.5" width="7" height="7" fill="none" stroke="#c9471f" stroke-width="1.2"/><rect x="17.5" y="17.5" width="7" height="7" fill="none" stroke="#c9471f" stroke-width="1.2"/></svg>
<div class="t" style="top:121.85px;font-size:12.2px;line-height:15.25px;color:#ffffff;left:1642.0px;width:60px;text-align:center;">Add-ins</div>
<div class="t" style="top:161.84px;font-size:12px;line-height:15.0px;color:#f0f0f0;left:1641.5px;width:60px;text-align:center;">Add-ins</div>
<div class="r" style="left:1703.5px;top:84px;width:1px;height:88px;background:#4a4a4a;"></div>
<svg class="r" style="left:1747px;top:89px;" width="26" height="27" viewBox="0 0 26 27"><path d="M2 1.5h8l4.5 4.5v12H2z" fill="none" stroke="#1a73e8" stroke-width="1.6"/><path d="M10 1.5v4.5h4.5" fill="none" stroke="#1a73e8" stroke-width="1.4"/><path d="M9 15v9h14v-9" fill="none" stroke="#1a73e8" stroke-width="1.6"/><path d="M16 20v-8M13 14.5l3-3 3 3" fill="none" stroke="#1a73e8" stroke-width="1.5"/></svg>
<div class="t" style="top:121.85px;font-size:12.2px;line-height:15.25px;color:#ffffff;left:1698.5px;width:120px;text-align:center;">Create and Share</div>
<div class="t" style="top:137.85px;font-size:12.2px;line-height:15.25px;color:#ffffff;left:1698.5px;width:120px;text-align:center;">Adobe PDF</div>
<div class="t" style="top:161.84px;font-size:12px;line-height:15.0px;color:#f0f0f0;left:1698.5px;width:120px;text-align:center;">Adobe Acrobat</div>
<div class="r" style="left:1813.5px;top:84px;width:1px;height:88px;background:#4a4a4a;"></div>
<svg class="r" style="left:1891px;top:160px;" width="13" height="8" viewBox="0 0 13 8"><path d="M1 1l5.5 5.5L12 1" fill="none" stroke="#d8d8d8" stroke-width="1.2"/></svg>
<div class="r" style="left:0px;top:177px;width:1920px;height:81px;background:linear-gradient(90deg,#1c1815 0%,#1b1714 55%,#151516 80%,#121416 100%);"></div>
<div class="r" style="left:8px;top:186px;width:103px;height:27px;background:#222222;border:1px solid #5e5e5e;border-radius:4px;box-sizing:border-box;"></div>
<div class="t" style="top:192.65px;font-size:12.2px;line-height:15.25px;color:#ffffff;left:15px;">CK226</div>
<svg class="r" style="left:93px;top:195px;" width="12" height="8" viewBox="0 0 12 8"><path d="M1 1.5l5 5 5-5" fill="none" stroke="#d8d8d8" stroke-width="1.2"/></svg>
<div class="r" style="left:119px;top:194px;width:2px;height:2px;background:#d0d0d0;"></div>
<div class="r" style="left:119px;top:199px;width:2px;height:2px;background:#d0d0d0;"></div>
<div class="r" style="left:119px;top:204px;width:2px;height:2px;background:#d0d0d0;"></div>
<div class="r" style="left:130px;top:186px;width:75px;height:27px;background:#222222;border:1px solid #5e5e5e;border-radius:4px;box-sizing:border-box;"></div>
<svg class="r" style="left:136px;top:192px;" width="14" height="14" viewBox="0 0 14 14"><path d="M1.5 1.5l11 11M12.5 1.5l-11 11" stroke="#777" stroke-width="1.1"/></svg>
<svg class="r" style="left:158px;top:192px;" width="17" height="14" viewBox="0 0 17 14"><path d="M1 7l5 5L16 2" fill="none" stroke="#777" stroke-width="1.1"/></svg>
<div class="t" style="top:191.43px;font-size:15px;line-height:18.75px;color:#e6e6e6;left:183px;font-style:italic;font-family:"Liberation Serif",serif;">fx</div>
<div class="r" style="left:208px;top:186px;width:1704px;height:66px;background:#292929;border:1px solid #8f8f8f;border-radius:5px;box-sizing:border-box;"></div>
<div class="t" style="top:192.65px;font-size:12.2px;line-height:15.25px;color:#ffffff;left:219.5px;">=CF44+CV44</div>
<svg class="r" style="left:1895px;top:191px;" width="13" height="8" viewBox="0 0 13 8"><path d="M1 7l5.5-5.5L12 7" fill="none" stroke="#d8d8d8" stroke-width="1.2"/></svg>
<div class="r" style="left:25px;top:275px;width:1873px;height:703px;background:#ffffff;"></div>
<div class="r" style="left:134px;top:275px;width:1px;height:703px;background:#dadada;"></div>
<div class="r" style="left:198px;top:275px;width:1px;height:703px;background:#dadada;"></div>
<div class="r" style="left:418px;top:275px;width:1px;height:703px;background:#dadada;"></div>
<div class="r" style="left:482px;top:275px;width:1px;height:703px;background:#dadada;"></div>
<div class="r" style="left:546px;top:275px;width:1px;height:703px;background:#dadada;"></div>
<div class="r" style="left:610px;top:275px;width:1px;height:703px;background:#dadada;"></div>
<div class="r" style="left:741px;top:275px;width:1px;height:703px;background:#dadada;"></div>
<div class="r" style="left:805px;top:275px;width:1px;height:703px;background:#dadada;"></div>
<div class="r" style="left:869px;top:275px;width:1px;height:703px;background:#dadada;"></div>
<div class="r" style="left:1010px;top:275px;width:1px;height:703px;background:#dadada;"></div>
<div class="r" style="left:1107px;top:275px;width:1px;height:703px;background:#dadada;"></div>
<div class="r" style="left:1204px;top:275px;width:1px;height:703px;background:#dadada;"></div>
<div class="r" style="left:1323px;top:275px;width:1px;height:703px;background:#dadada;"></div>
<div class="r" style="left:1420px;top:275px;width:1px;height:703px;background:#dadada;"></div>
<div class="r" style="left:1517px;top:275px;width:1px;height:703px;background:#dadada;"></div>
<div class="r" style="left:1614px;top:275px;width:1px;height:703px;background:#dadada;"></div>
<div class="r" style="left:1711px;top:275px;width:1px;height:703px;background:#dadada;"></div>
<div class="r" style="left:1808px;top:275px;width:1px;height:703px;background:#dadada;"></div>
<div class="r" style="left:1898px;top:275px;width:1px;height:703px;background:#dadada;"></div>
<div class="r" style="left:25px;top:292px;width:1873px;height:1px;background:#dadada;"></div>
<div class="r" style="left:25px;top:309px;width:1873px;height:1px;background:#dadada;"></div>
<div class="r" style="left:25px;top:347px;width:1873px;height:1px;background:#dadada;"></div>
<div class="r" style="left:25px;top:386px;width:1873px;height:1px;background:#dadada;"></div>
<div class="r" style="left:25px;top:449px;width:1873px;height:1px;background:#dadada;"></div>
<div class="r" style="left:25px;top:470px;width:1873px;height:1px;background:#dadada;"></div>
<div class="r" style="left:25px;top:491px;width:1873px;height:1px;background:#dadada;"></div>
<div class="r" style="left:25px;top:512px;width:1873px;height:1px;background:#dadada;"></div>
<div class="r" style="left:25px;top:530px;width:1873px;height:1px;background:#dadada;"></div>
<div class="r" style="left:25px;top:550px;width:1873px;height:1px;background:#dadada;"></div>
<div class="r" style="left:25px;top:571px;width:1873px;height:1px;background:#dadada;"></div>
<div class="r" style="left:25px;top:588px;width:1873px;height:1px;background:#dadada;"></div>
<div class="r" style="left:25px;top:605px;width:1873px;height:1px;background:#dadada;"></div>
<div class="r" style="left:25px;top:626px;width:1873px;height:1px;background:#dadada;"></div>
<div class="r" style="left:25px;top:643px;width:1873px;height:1px;background:#dadada;"></div>
<div class="r" style="left:25px;top:660px;width:1873px;height:1px;background:#dadada;"></div>
<div class="r" style="left:25px;top:677px;width:1873px;height:1px;background:#dadada;"></div>
<div class="r" style="left:25px;top:694px;width:1873px;height:1px;background:#dadada;"></div>
<div class="r" style="left:25px;top:711px;width:1873px;height:1px;background:#dadada;"></div>
<div class="r" style="left:25px;top:728px;width:1873px;height:1px;background:#dadada;"></div>
<div class="r" style="left:25px;top:745px;width:1873px;height:1px;background:#dadada;"></div>
<div class="r" style="left:25px;top:762px;width:1873px;height:1px;background:#dadada;"></div>
<div class="r" style="left:25px;top:786px;width:1873px;height:1px;background:#dadada;"></div>
<div class="r" style="left:25px;top:803px;width:1873px;height:1px;background:#dadada;"></div>
<div class="r" style="left:25px;top:820px;width:1873px;height:1px;background:#dadada;"></div>
<div class="r" style="left:25px;top:837px;width:1873px;height:1px;background:#dadada;"></div>
<div class="r" style="left:25px;top:854px;width:1873px;height:1px;background:#dadada;"></div>
<div class="r" style="left:25px;top:871px;width:1873px;height:1px;background:#dadada;"></div>
<div class="r" style="left:25px;top:888px;width:1873px;height:1px;background:#dadada;"></div>
<div class="r" style="left:25px;top:905px;width:1873px;height:1px;background:#dadada;"></div>
<div class="r" style="left:25px;top:922px;width:1873px;height:1px;background:#dadada;"></div>
<div class="r" style="left:25px;top:939px;width:1873px;height:1px;background:#dadada;"></div>
<div class="r" style="left:25px;top:956px;width:1873px;height:1px;background:#dadada;"></div>
<div class="r" style="left:25px;top:973px;width:1873px;height:1px;background:#dadada;"></div>
<div class="r" style="left:871px;top:348px;width:840px;height:37px;background:#ffffff;"></div>
<div class="r" style="left:418px;top:386px;width:451px;height:63px;background:#da9694;"></div>
<div class="r" style="left:869px;top:386px;width:1029px;height:63px;background:#b7dee8;"></div>
<div class="r" style="left:1011px;top:450px;width:96px;height:20px;background:#ffc000;"></div>
<div class="r" style="left:1011px;top:471px;width:96px;height:20px;background:#ffc000;"></div>
<div class="r" style="left:1011px;top:492px;width:96px;height:20px;background:#ffc000;"></div>
<div class="r" style="left:1011px;top:513px;width:96px;height:17px;background:#ffc000;"></div>
<div class="r" style="left:1011px;top:531px;width:96px;height:19px;background:#ffc000;"></div>
<div class="r" style="left:1011px;top:551px;width:96px;height:20px;background:#ffc000;"></div>
<div class="r" style="left:1011px;top:572px;width:96px;height:16px;background:#ffc000;"></div>
<div class="r" style="left:1011px;top:589px;width:96px;height:16px;background:#ffc000;"></div>
<div class="r" style="left:1421px;top:450px;width:96px;height:20px;background:#ffc000;"></div>
<div class="r" style="left:1421px;top:471px;width:96px;height:20px;background:#ffc000;"></div>
<div class="r" style="left:1421px;top:492px;width:96px;height:20px;background:#ffc000;"></div>
<div class="r" style="left:1421px;top:513px;width:96px;height:17px;background:#ffc000;"></div>
<div class="r" style="left:1421px;top:531px;width:96px;height:19px;background:#ffc000;"></div>
<div class="r" style="left:1421px;top:551px;width:96px;height:20px;background:#ffc000;"></div>
<div class="r" style="left:1421px;top:572px;width:96px;height:16px;background:#ffc000;"></div>
<div class="r" style="left:1421px;top:589px;width:96px;height:16px;background:#ffc000;"></div>
<div class="r" style="left:1809px;top:450px;width:89px;height:20px;background:#ffc000;"></div>
<div class="r" style="left:1809px;top:492px;width:89px;height:20px;background:#ffc000;"></div>
<div class="r" style="left:1809px;top:531px;width:89px;height:19px;background:#ffc000;"></div>
<div class="r" style="left:1809px;top:572px;width:89px;height:16px;background:#ffc000;"></div>
<div class="r" style="left:198px;top:385px;width:1700px;height:1px;background:#000000;"></div>
<div class="r" style="left:25px;top:449px;width:1873px;height:1px;background:#8e8e8e;"></div>
<div class="r" style="left:198px;top:470px;width:1700px;height:1px;background:#000000;"></div>
<div class="r" style="left:198px;top:491px;width:1700px;height:1px;background:#000000;"></div>
<div class="r" style="left:198px;top:512px;width:1700px;height:1px;background:#000000;"></div>
<div class="r" style="left:198px;top:530px;width:1700px;height:1px;background:#000000;"></div>
<div class="r" style="left:198px;top:550px;width:1700px;height:1px;background:#000000;"></div>
<div class="r" style="left:198px;top:571px;width:1700px;height:1px;background:#000000;"></div>
<div class="r" style="left:198px;top:588px;width:1700px;height:1px;background:#000000;"></div>
<div class="r" style="left:198px;top:605px;width:1700px;height:1px;background:#000000;"></div>
<div class="r" style="left:198px;top:626px;width:1700px;height:1px;background:#000000;"></div>
<div class="r" style="left:198px;top:385px;width:1px;height:242px;background:#000000;"></div>
<div class="r" style="left:418px;top:385px;width:1px;height:242px;background:#000000;"></div>
<div class="r" style="left:482px;top:385px;width:1px;height:242px;background:#000000;"></div>
<div class="r" style="left:546px;top:385px;width:1px;height:242px;background:#000000;"></div>
<div class="r" style="left:610px;top:385px;width:1px;height:242px;background:#000000;"></div>
<div class="r" style="left:741px;top:385px;width:1px;height:242px;background:#000000;"></div>
<div class="r" style="left:805px;top:385px;width:1px;height:242px;background:#000000;"></div>
<div class="r" style="left:1010px;top:385px;width:1px;height:242px;background:#000000;"></div>
<div class="r" style="left:1107px;top:385px;width:1px;height:242px;background:#000000;"></div>
<div class="r" style="left:1204px;top:385px;width:1px;height:242px;background:#000000;"></div>
<div class="r" style="left:1323px;top:385px;width:1px;height:242px;background:#000000;"></div>
<div class="r" style="left:1420px;top:385px;width:1px;height:242px;background:#000000;"></div>
<div class="r" style="left:1517px;top:385px;width:1px;height:242px;background:#000000;"></div>
<div class="r" style="left:1614px;top:385px;width:1px;height:242px;background:#000000;"></div>
<div class="r" style="left:1711px;top:385px;width:1px;height:242px;background:#000000;"></div>
<div class="r" style="left:1808px;top:385px;width:1px;height:242px;background:#000000;"></div>
<div class="r" style="left:869px;top:275px;width:1px;height:703px;background:#8a8a8a;"></div>
<div class="r" style="left:0px;top:258px;width:1898px;height:17px;background:#0b0b0b;"></div>
<div class="t" style="top:258.91px;font-size:14.3px;line-height:17.88px;color:#f0f0f0;letter-spacing:-0.9px;left:25.049999999999997px;width:109px;text-align:center;">A</div>
<div class="r" style="left:134px;top:260px;width:1px;height:15px;background:#5a5a5a;"></div>
<div class="t" style="top:258.91px;font-size:14.3px;line-height:17.88px;color:#f0f0f0;letter-spacing:-0.9px;left:134.05px;width:64px;text-align:center;">B</div>
<div class="r" style="left:198px;top:260px;width:1px;height:15px;background:#5a5a5a;"></div>
<div class="t" style="top:258.91px;font-size:14.3px;line-height:17.88px;color:#f0f0f0;letter-spacing:-0.9px;left:198.05px;width:220px;text-align:center;">C</div>
<div class="r" style="left:418px;top:260px;width:1px;height:15px;background:#5a5a5a;"></div>
<div class="t" style="top:258.91px;font-size:14.3px;line-height:17.88px;color:#f0f0f0;letter-spacing:-0.9px;left:418.05px;width:64px;text-align:center;">D</div>
<div class="r" style="left:482px;top:260px;width:1px;height:15px;background:#5a5a5a;"></div>
<div class="t" style="top:258.91px;font-size:14.3px;line-height:17.88px;color:#f0f0f0;letter-spacing:-0.9px;left:482.04999999999995px;width:64px;text-align:center;">E</div>
<div class="r" style="left:546px;top:260px;width:1px;height:15px;background:#5a5a5a;"></div>
<div class="t" style="top:258.91px;font-size:14.3px;line-height:17.88px;color:#f0f0f0;letter-spacing:-0.9px;left:546.05px;width:64px;text-align:center;">F</div>
<div class="r" style="left:610px;top:260px;width:1px;height:15px;background:#5a5a5a;"></div>
<div class="t" style="top:258.91px;font-size:14.3px;line-height:17.88px;color:#f0f0f0;letter-spacing:-0.9px;left:610.05px;width:131px;text-align:center;">G</div>
<div class="r" style="left:741px;top:260px;width:1px;height:15px;background:#5a5a5a;"></div>
<div class="t" style="top:258.91px;font-size:14.3px;line-height:17.88px;color:#f0f0f0;letter-spacing:-0.9px;left:741.05px;width:64px;text-align:center;">H</div>
<div class="r" style="left:805px;top:260px;width:1px;height:15px;background:#5a5a5a;"></div>
<div class="t" style="top:258.91px;font-size:14.3px;line-height:17.88px;color:#f0f0f0;letter-spacing:-0.9px;left:805.05px;width:64px;text-align:center;">I</div>
<div class="r" style="left:869px;top:260px;width:1px;height:15px;background:#5a5a5a;"></div>
<div class="t" style="top:258.91px;font-size:14.3px;line-height:17.88px;color:#f0f0f0;letter-spacing:-0.9px;left:869.05px;width:141px;text-align:center;">CE</div>
<div class="r" style="left:1010px;top:260px;width:1px;height:15px;background:#5a5a5a;"></div>
<div class="t" style="top:258.91px;font-size:14.3px;line-height:17.88px;color:#f0f0f0;letter-spacing:-0.9px;left:1010.05px;width:97px;text-align:center;">CF</div>
<div class="r" style="left:1107px;top:260px;width:1px;height:15px;background:#5a5a5a;"></div>
<div class="t" style="top:258.91px;font-size:14.3px;line-height:17.88px;color:#f0f0f0;letter-spacing:-0.9px;left:1107.05px;width:97px;text-align:center;">CG</div>
<div class="r" style="left:1204px;top:260px;width:1px;height:15px;background:#5a5a5a;"></div>
<div class="t" style="top:258.91px;font-size:14.3px;line-height:17.88px;color:#f0f0f0;letter-spacing:-0.9px;left:1204.05px;width:119px;text-align:center;">CH</div>
<div class="r" style="left:1323px;top:260px;width:1px;height:15px;background:#5a5a5a;"></div>
<div class="t" style="top:258.91px;font-size:14.3px;line-height:17.88px;color:#f0f0f0;letter-spacing:-0.9px;left:1323.05px;width:97px;text-align:center;">CI</div>
<div class="r" style="left:1420px;top:260px;width:1px;height:15px;background:#5a5a5a;"></div>
<div class="t" style="top:258.91px;font-size:14.3px;line-height:17.88px;color:#f0f0f0;letter-spacing:-0.9px;left:1420.05px;width:97px;text-align:center;">CJ</div>
<div class="r" style="left:1517px;top:260px;width:1px;height:15px;background:#5a5a5a;"></div>
<div class="r" style="left:1518px;top:259px;width:96px;height:16px;background:#6b6b6b;"></div>
<div class="r" style="left:1518px;top:274px;width:96px;height:2px;background:#227447;"></div>
<div class="t" style="top:258.91px;font-size:14.3px;line-height:17.88px;color:#f0f0f0;letter-spacing:-0.9px;left:1517.05px;width:97px;text-align:center;">CK</div>
<div class="r" style="left:1614px;top:260px;width:1px;height:15px;background:#5a5a5a;"></div>
<div class="t" style="top:258.91px;font-size:14.3px;line-height:17.88px;color:#f0f0f0;letter-spacing:-0.9px;left:1614.05px;width:97px;text-align:center;">CL</div>
<div class="r" style="left:1711px;top:260px;width:1px;height:15px;background:#5a5a5a;"></div>
<div class="t" style="top:258.91px;font-size:14.3px;line-height:17.88px;color:#f0f0f0;letter-spacing:-0.9px;left:1711.05px;width:97px;text-align:center;">CU</div>
<div class="r" style="left:1808px;top:260px;width:1px;height:15px;background:#5a5a5a;"></div>
<div class="t" style="top:258.91px;font-size:14.3px;line-height:17.88px;color:#f0f0f0;letter-spacing:-0.9px;left:1808.05px;width:90px;text-align:center;">CV</div>
<div class="r" style="left:1898px;top:260px;width:1px;height:15px;background:#5a5a5a;"></div>
<div class="r" style="left:867px;top:260px;width:1px;height:15px;background:#7a7a7a;"></div>
<div class="r" style="left:1709px;top:260px;width:1px;height:15px;background:#5a5a5a;"></div>
<div class="r" style="left:1713px;top:260px;width:1px;height:15px;background:#5a5a5a;"></div>
<div class="r" style="left:25px;top:258px;width:1px;height:17px;background:#5a5a5a;"></div>
<svg class="r" style="left:11px;top:262px;" width="12" height="12" viewBox="0 0 12 12"><path d="M11 1v10H1z" fill="#6a6a6a"/></svg>
<div class="r" style="left:0px;top:275px;width:25px;height:703px;background:#0b0b0b;"></div>
<div class="t" style="top:275.11px;font-size:14.3px;line-height:17.88px;color:#f0f0f0;letter-spacing:-1.0px;left:-0.5px;width:25px;text-align:center;">1</div>
<div class="r" style="left:0px;top:292px;width:25px;height:1px;background:#5a5a5a;"></div>
<div class="t" style="top:292.11px;font-size:14.3px;line-height:17.88px;color:#f0f0f0;letter-spacing:-1.0px;left:-0.5px;width:25px;text-align:center;">2</div>
<div class="r" style="left:0px;top:309px;width:25px;height:1px;background:#5a5a5a;"></div>
<div class="t" style="top:330.11px;font-size:14.3px;line-height:17.88px;color:#f0f0f0;letter-spacing:-1.0px;left:-0.5px;width:25px;text-align:center;">3</div>
<div class="r" style="left:0px;top:347px;width:25px;height:1px;background:#5a5a5a;"></div>
<div class="t" style="top:369.11px;font-size:14.3px;line-height:17.88px;color:#f0f0f0;letter-spacing:-1.0px;left:-0.5px;width:25px;text-align:center;">4</div>
<div class="r" style="left:0px;top:386px;width:25px;height:1px;background:#5a5a5a;"></div>
<div class="t" style="top:432.11px;font-size:14.3px;line-height:17.88px;color:#f0f0f0;letter-spacing:-1.0px;left:-0.5px;width:25px;text-align:center;">5</div>
<div class="r" style="left:0px;top:449px;width:25px;height:1px;background:#5a5a5a;"></div>
<div class="t" style="top:453.11px;font-size:14.3px;line-height:17.88px;color:#79d2e6;letter-spacing:-1.0px;left:-0.5px;width:25px;text-align:center;">40</div>
<div class="r" style="left:0px;top:470px;width:25px;height:1px;background:#5a5a5a;"></div>
<div class="t" style="top:474.11px;font-size:14.3px;line-height:17.88px;color:#79d2e6;letter-spacing:-1.0px;left:-0.5px;width:25px;text-align:center;">44</div>
<div class="r" style="left:0px;top:491px;width:25px;height:1px;background:#5a5a5a;"></div>
<div class="t" style="top:495.11px;font-size:14.3px;line-height:17.88px;color:#79d2e6;letter-spacing:-1.0px;left:-0.5px;width:25px;text-align:center;">46</div>
<div class="r" style="left:0px;top:512px;width:25px;height:1px;background:#5a5a5a;"></div>
<div class="t" style="top:513.11px;font-size:14.3px;line-height:17.88px;color:#79d2e6;letter-spacing:-1.0px;left:-0.5px;width:25px;text-align:center;">47</div>
<div class="r" style="left:0px;top:530px;width:25px;height:1px;background:#5a5a5a;"></div>
<div class="t" style="top:533.11px;font-size:14.3px;line-height:17.88px;color:#79d2e6;letter-spacing:-1.0px;left:-0.5px;width:25px;text-align:center;">50</div>
<div class="r" style="left:0px;top:550px;width:25px;height:1px;background:#5a5a5a;"></div>
<div class="t" style="top:554.11px;font-size:14.3px;line-height:17.88px;color:#79d2e6;letter-spacing:-1.0px;left:-0.5px;width:25px;text-align:center;">52</div>
<div class="r" style="left:0px;top:571px;width:25px;height:1px;background:#5a5a5a;"></div>
<div class="t" style="top:571.11px;font-size:14.3px;line-height:17.88px;color:#79d2e6;letter-spacing:-1.0px;left:-0.5px;width:25px;text-align:center;">53</div>
<div class="r" style="left:0px;top:588px;width:25px;height:1px;background:#5a5a5a;"></div>
<div class="t" style="top:588.11px;font-size:14.3px;line-height:17.88px;color:#79d2e6;letter-spacing:-1.0px;left:-0.5px;width:25px;text-align:center;">55</div>
<div class="r" style="left:0px;top:605px;width:25px;height:1px;background:#5a5a5a;"></div>
<div class="t" style="top:609.11px;font-size:14.3px;line-height:17.88px;color:#79d2e6;letter-spacing:-1.0px;left:-0.5px;width:25px;text-align:center;">108</div>
<div class="r" style="left:0px;top:626px;width:25px;height:1px;background:#5a5a5a;"></div>
<div class="t" style="top:626.11px;font-size:14.3px;line-height:17.88px;color:#f0f0f0;letter-spacing:-1.0px;left:-0.5px;width:25px;text-align:center;">222</div>
<div class="r" style="left:0px;top:643px;width:25px;height:1px;background:#5a5a5a;"></div>
<div class="t" style="top:643.11px;font-size:14.3px;line-height:17.88px;color:#f0f0f0;letter-spacing:-1.0px;left:-0.5px;width:25px;text-align:center;">223</div>
<div class="r" style="left:0px;top:660px;width:25px;height:1px;background:#5a5a5a;"></div>
<div class="t" style="top:660.11px;font-size:14.3px;line-height:17.88px;color:#f0f0f0;letter-spacing:-1.0px;left:-0.5px;width:25px;text-align:center;">224</div>
<div class="r" style="left:0px;top:677px;width:25px;height:1px;background:#5a5a5a;"></div>
<div class="t" style="top:677.11px;font-size:14.3px;line-height:17.88px;color:#f0f0f0;letter-spacing:-1.0px;left:-0.5px;width:25px;text-align:center;">225</div>
<div class="r" style="left:0px;top:694px;width:25px;height:1px;background:#5a5a5a;"></div>
<div class="r" style="left:0px;top:695px;width:25px;height:16px;background:#6b6b6b;"></div>
<div class="r" style="left:24px;top:694px;width:2px;height:18px;background:#227447;"></div>
<div class="t" style="top:694.11px;font-size:14.3px;line-height:17.88px;color:#f0f0f0;letter-spacing:-1.0px;left:-0.5px;width:25px;text-align:center;">226</div>
<div class="r" style="left:0px;top:711px;width:25px;height:1px;background:#5a5a5a;"></div>
<div class="t" style="top:711.11px;font-size:14.3px;line-height:17.88px;color:#f0f0f0;letter-spacing:-1.0px;left:-0.5px;width:25px;text-align:center;">227</div>
<div class="r" style="left:0px;top:728px;width:25px;height:1px;background:#5a5a5a;"></div>
<div class="t" style="top:728.11px;font-size:14.3px;line-height:17.88px;color:#f0f0f0;letter-spacing:-1.0px;left:-0.5px;width:25px;text-align:center;">228</div>
<div class="r" style="left:0px;top:745px;width:25px;height:1px;background:#5a5a5a;"></div>
<div class="t" style="top:745.11px;font-size:14.3px;line-height:17.88px;color:#f0f0f0;letter-spacing:-1.0px;left:-0.5px;width:25px;text-align:center;">229</div>
<div class="r" style="left:0px;top:762px;width:25px;height:1px;background:#5a5a5a;"></div>
<div class="t" style="top:769.11px;font-size:14.3px;line-height:17.88px;color:#f0f0f0;letter-spacing:-1.0px;left:-0.5px;width:25px;text-align:center;">230</div>
<div class="r" style="left:0px;top:786px;width:25px;height:1px;background:#5a5a5a;"></div>
<div class="t" style="top:786.11px;font-size:14.3px;line-height:17.88px;color:#f0f0f0;letter-spacing:-1.0px;left:-0.5px;width:25px;text-align:center;">231</div>
<div class="r" style="left:0px;top:803px;width:25px;height:1px;background:#5a5a5a;"></div>
<div class="t" style="top:803.11px;font-size:14.3px;line-height:17.88px;color:#f0f0f0;letter-spacing:-1.0px;left:-0.5px;width:25px;text-align:center;">232</div>
<div class="r" style="left:0px;top:820px;width:25px;height:1px;background:#5a5a5a;"></div>
<div class="t" style="top:820.11px;font-size:14.3px;line-height:17.88px;color:#f0f0f0;letter-spacing:-1.0px;left:-0.5px;width:25px;text-align:center;">233</div>
<div class="r" style="left:0px;top:837px;width:25px;height:1px;background:#5a5a5a;"></div>
<div class="t" style="top:837.11px;font-size:14.3px;line-height:17.88px;color:#f0f0f0;letter-spacing:-1.0px;left:-0.5px;width:25px;text-align:center;">234</div>
<div class="r" style="left:0px;top:854px;width:25px;height:1px;background:#5a5a5a;"></div>
<div class="t" style="top:854.11px;font-size:14.3px;line-height:17.88px;color:#f0f0f0;letter-spacing:-1.0px;left:-0.5px;width:25px;text-align:center;">235</div>
<div class="r" style="left:0px;top:871px;width:25px;height:1px;background:#5a5a5a;"></div>
<div class="t" style="top:871.11px;font-size:14.3px;line-height:17.88px;color:#f0f0f0;letter-spacing:-1.0px;left:-0.5px;width:25px;text-align:center;">236</div>
<div class="r" style="left:0px;top:888px;width:25px;height:1px;background:#5a5a5a;"></div>
<div class="t" style="top:888.11px;font-size:14.3px;line-height:17.88px;color:#f0f0f0;letter-spacing:-1.0px;left:-0.5px;width:25px;text-align:center;">237</div>
<div class="r" style="left:0px;top:905px;width:25px;height:1px;background:#5a5a5a;"></div>
<div class="t" style="top:905.11px;font-size:14.3px;line-height:17.88px;color:#f0f0f0;letter-spacing:-1.0px;left:-0.5px;width:25px;text-align:center;">238</div>
<div class="r" style="left:0px;top:922px;width:25px;height:1px;background:#5a5a5a;"></div>
<div class="t" style="top:922.11px;font-size:14.3px;line-height:17.88px;color:#f0f0f0;letter-spacing:-1.0px;left:-0.5px;width:25px;text-align:center;">239</div>
<div class="r" style="left:0px;top:939px;width:25px;height:1px;background:#5a5a5a;"></div>
<div class="t" style="top:939.11px;font-size:14.3px;line-height:17.88px;color:#f0f0f0;letter-spacing:-1.0px;left:-0.5px;width:25px;text-align:center;">240</div>
<div class="r" style="left:0px;top:956px;width:25px;height:1px;background:#5a5a5a;"></div>
<div class="t" style="top:956.11px;font-size:14.3px;line-height:17.88px;color:#f0f0f0;letter-spacing:-1.0px;left:-0.5px;width:25px;text-align:center;">241</div>
<div class="r" style="left:0px;top:973px;width:25px;height:1px;background:#5a5a5a;"></div>
<div class="t" style="top:973.11px;font-size:14.3px;line-height:17.88px;color:#f0f0f0;letter-spacing:-1.0px;left:-0.5px;width:25px;text-align:center;clip-path:inset(0 0 14px 0);">242</div>
<div class="r" style="left:0px;top:990px;width:25px;height:1px;background:#5a5a5a;"></div>
<div class="r" style="left:0px;top:447px;width:25px;height:1px;background:#5a5a5a;"></div>
<div class="r" style="left:0px;top:468px;width:25px;height:1px;background:#5a5a5a;"></div>
<div class="r" style="left:0px;top:489px;width:25px;height:1px;background:#5a5a5a;"></div>
<div class="r" style="left:0px;top:510px;width:25px;height:1px;background:#5a5a5a;"></div>
<div class="r" style="left:0px;top:528px;width:25px;height:1px;background:#5a5a5a;"></div>
<div class="r" style="left:0px;top:548px;width:25px;height:1px;background:#5a5a5a;"></div>
<div class="r" style="left:0px;top:569px;width:25px;height:1px;background:#5a5a5a;"></div>
<div class="r" style="left:0px;top:586px;width:25px;height:1px;background:#5a5a5a;"></div>
<div class="r" style="left:0px;top:603px;width:25px;height:1px;background:#5a5a5a;"></div>
<div class="r" style="left:0px;top:624px;width:25px;height:1px;background:#5a5a5a;"></div>
<div class="t" style="top:332.28px;font-size:13.3px;line-height:16.62px;color:#000000;letter-spacing:-0.28px;left:404.5px;width:600px;text-align:right;">46.768.066,67</div>
<div class="t" style="top:332.28px;font-size:13.3px;line-height:16.62px;color:#000000;letter-spacing:-0.28px;left:501.5px;width:600px;text-align:right;">7.614.500,00</div>
<div class="t" style="top:332.28px;font-size:13.3px;line-height:16.62px;color:#000000;letter-spacing:-0.28px;left:598.5px;width:600px;text-align:right;">1.479.805,24</div>
<div class="t" style="top:332.28px;font-size:13.3px;line-height:16.62px;color:#000000;letter-spacing:-0.28px;left:717.5px;width:600px;text-align:right;">55.862.371,91</div>
<div class="t" style="top:332.28px;font-size:13.3px;line-height:16.62px;color:#000000;letter-spacing:-0.28px;left:911.5px;width:600px;text-align:right;">349.340,81</div>
<div class="t" style="top:332.28px;font-size:13.3px;line-height:16.62px;color:#000000;letter-spacing:-0.28px;left:1008.5px;width:600px;text-align:right;">932.432,60</div>
<div class="t" style="top:332.28px;font-size:13.3px;line-height:16.62px;color:#000000;letter-spacing:-0.28px;left:1105.5px;width:600px;text-align:right;">466.216,30</div>
<div class="t" style="top:332.28px;font-size:13.3px;line-height:16.62px;color:#000000;letter-spacing:-0.28px;left:1202.5px;width:600px;text-align:right;">25.306.000,00</div>
<div class="t" style="top:332.28px;font-size:13.3px;line-height:16.62px;color:#000000;letter-spacing:-0.28px;left:1298.5px;width:600px;text-align:right;">11.829.500,00</div>
<div class="t" style="top:332.08px;font-size:13.3px;line-height:16.62px;color:#000000;left:1395.5px;">-</div>
<div class="t" style="top:359.08px;font-size:13.3px;line-height:16.62px;color:#000000;letter-spacing:-0.3px;left:1278px;">OKT</div>
<div class="t" style="top:453.86px;font-size:13.3px;line-height:16.62px;color:#000000;letter-spacing:0px;left:136.5px;width:60px;text-align:center;">36</div>
<div class="t" style="top:453.86px;font-size:13.3px;line-height:16.62px;color:#000000;letter-spacing:-0.2px;left:201px;">Agis Mardiana</div>
<div class="t" style="top:453.86px;font-size:13.3px;line-height:16.62px;color:#000000;letter-spacing:-0.2px;left:-120px;width:600px;text-align:right;">6</div>
<div class="t" style="top:453.86px;font-size:13.3px;line-height:16.62px;color:#000000;letter-spacing:-0.2px;left:-56px;width:600px;text-align:right;">12</div>
<div class="t" style="top:453.86px;font-size:13.3px;line-height:16.62px;color:#000000;letter-spacing:-0.2px;left:8px;width:600px;text-align:right;">7</div>
<div class="t" style="top:454.36px;font-size:13.3px;line-height:16.62px;color:#000000;letter-spacing:-0.4px;left:613px;">3207091505990003</div>
<div class="t" style="top:453.86px;font-size:13.3px;line-height:16.62px;color:#000000;letter-spacing:-0.2px;left:744px;">TMI</div>
<div class="t" style="top:453.86px;font-size:13.3px;line-height:16.62px;color:#000000;letter-spacing:-0.2px;left:808px;">TK/0</div>
<svg class="r" style="left:611px;top:450px;" width="7" height="7" viewBox="0 0 7 7"><path d="M0 0h7L0 7z" fill="#1a8a3a"/></svg>
<svg class="r" style="left:1205px;top:450px;" width="7" height="7" viewBox="0 0 7 7"><path d="M0 0h7L0 7z" fill="#1a8a3a"/></svg>
<div class="t" style="top:452.74px;font-size:12.5px;line-height:15.62px;color:#000000;font-weight:bold;letter-spacing:0.25px;left:402.79999999999995px;width:600px;text-align:right;-webkit-text-stroke:0.15px #000;">4.483.000,00</div>
<div class="t" style="top:452.92px;font-size:11.7px;line-height:14.62px;color:#000000;font-weight:bold;left:490.5px;width:600px;text-align:right;">-</div>
<div class="t" style="top:452.74px;font-size:12.5px;line-height:15.62px;color:#000000;font-weight:bold;letter-spacing:0.25px;left:598.8px;width:600px;text-align:right;-webkit-text-stroke:0.15px #000;">203.524,30</div>
<div class="t" style="top:453.86px;font-size:13.3px;line-height:16.62px;color:#000000;letter-spacing:-0.28px;left:717px;width:600px;text-align:right;">4.686.524,30</div>
<div class="t" style="top:452.86px;font-size:13.3px;line-height:16.62px;color:#000000;left:1395.5px;">-</div>
<div class="t" style="top:452.74px;font-size:12.5px;line-height:15.62px;color:#000000;font-weight:bold;letter-spacing:0.25px;left:908.8px;width:600px;text-align:right;-webkit-text-stroke:0.15px #000;">14.030,06</div>
<div class="t" style="top:453.86px;font-size:13.3px;line-height:16.62px;color:#000000;letter-spacing:-0.28px;left:1008px;width:600px;text-align:right;">89.658,28</div>
<div class="t" style="top:453.86px;font-size:13.3px;line-height:16.62px;color:#000000;letter-spacing:-0.28px;left:1105px;width:600px;text-align:right;">44.829,14</div>
<div class="t" style="top:452.74px;font-size:12.5px;line-height:15.62px;color:#000000;font-weight:bold;letter-spacing:0.25px;left:1200.8px;width:600px;text-align:right;-webkit-text-stroke:0.15px #000;">4.483.000,00</div>
<div class="t" style="top:452.74px;font-size:12.5px;line-height:15.62px;color:#000000;font-weight:bold;letter-spacing:0.25px;left:1299.8px;width:600px;text-align:right;-webkit-text-stroke:0.15px #000;">1.907.000,00</div>
<div class="t" style="top:474.86px;font-size:13.3px;line-height:16.62px;color:#000000;letter-spacing:0px;left:136.5px;width:60px;text-align:center;">40</div>
<div class="t" style="top:474.86px;font-size:13.3px;line-height:16.62px;color:#000000;letter-spacing:-0.2px;left:201px;">Fajar Rihadi</div>
<div class="t" style="top:474.86px;font-size:13.3px;line-height:16.62px;color:#000000;letter-spacing:-0.2px;left:-120px;width:600px;text-align:right;">5</div>
<div class="t" style="top:474.86px;font-size:13.3px;line-height:16.62px;color:#000000;letter-spacing:-0.2px;left:-56px;width:600px;text-align:right;">12</div>
<div class="t" style="top:474.86px;font-size:13.3px;line-height:16.62px;color:#000000;letter-spacing:-0.2px;left:8px;width:600px;text-align:right;">8</div>
<div class="t" style="top:475.36px;font-size:13.3px;line-height:16.62px;color:#000000;letter-spacing:-0.4px;left:613px;">3671110208810005</div>
<div class="t" style="top:474.86px;font-size:13.3px;line-height:16.62px;color:#000000;letter-spacing:-0.2px;left:744px;">TMI</div>
<div class="t" style="top:474.86px;font-size:13.3px;line-height:16.62px;color:#000000;letter-spacing:-0.2px;left:808px;">K/1</div>
<svg class="r" style="left:611px;top:471px;" width="7" height="7" viewBox="0 0 7 7"><path d="M0 0h7L0 7z" fill="#1a8a3a"/></svg>
<svg class="r" style="left:1205px;top:471px;" width="7" height="7" viewBox="0 0 7 7"><path d="M0 0h7L0 7z" fill="#1a8a3a"/></svg>
<div class="t" style="top:473.74px;font-size:12.5px;line-height:15.62px;color:#000000;font-weight:bold;letter-spacing:0.25px;left:402.79999999999995px;width:600px;text-align:right;-webkit-text-stroke:0.15px #000;">4.902.000,00</div>
<div class="t" style="top:473.74px;font-size:12.5px;line-height:15.62px;color:#000000;font-weight:bold;letter-spacing:0.25px;left:500.79999999999995px;width:600px;text-align:right;-webkit-text-stroke:0.15px #000;">1.385.000,00</div>
<div class="t" style="top:473.74px;font-size:12.5px;line-height:15.62px;color:#000000;font-weight:bold;letter-spacing:0.25px;left:598.8px;width:600px;text-align:right;-webkit-text-stroke:0.15px #000;">222.510,71</div>
<div class="t" style="top:474.86px;font-size:13.3px;line-height:16.62px;color:#000000;letter-spacing:-0.28px;left:717px;width:600px;text-align:right;">6.509.510,71</div>
<div class="t" style="top:473.86px;font-size:13.3px;line-height:16.62px;color:#000000;left:1395.5px;">-</div>
<div class="t" style="top:473.74px;font-size:12.5px;line-height:15.62px;color:#000000;font-weight:bold;letter-spacing:0.25px;left:908.8px;width:600px;text-align:right;-webkit-text-stroke:0.15px #000;">32.547,56</div>
<div class="t" style="top:474.86px;font-size:13.3px;line-height:16.62px;color:#000000;letter-spacing:-0.28px;left:1008px;width:600px;text-align:right;">98.022,34</div>
<div class="t" style="top:474.86px;font-size:13.3px;line-height:16.62px;color:#000000;letter-spacing:-0.28px;left:1105px;width:600px;text-align:right;">49.011,17</div>
<div class="t" style="top:473.74px;font-size:12.5px;line-height:15.62px;color:#000000;font-weight:bold;letter-spacing:0.25px;left:1200.8px;width:600px;text-align:right;-webkit-text-stroke:0.15px #000;">4.902.000,00</div>
<div class="t" style="top:473.74px;font-size:12.5px;line-height:15.62px;color:#000000;font-weight:bold;letter-spacing:0.25px;left:1299.8px;width:600px;text-align:right;-webkit-text-stroke:0.15px #000;">1.545.000,00</div>
<div class="t" style="top:495.86px;font-size:13.3px;line-height:16.62px;color:#000000;letter-spacing:0px;left:136.5px;width:60px;text-align:center;">42</div>
<div class="t" style="top:495.86px;font-size:13.3px;line-height:16.62px;color:#000000;letter-spacing:-0.2px;left:201px;">Ahmad Zulfikri</div>
<div class="t" style="top:495.86px;font-size:13.3px;line-height:16.62px;color:#000000;letter-spacing:-0.2px;left:-120px;width:600px;text-align:right;">5</div>
<div class="t" style="top:495.86px;font-size:13.3px;line-height:16.62px;color:#000000;letter-spacing:-0.2px;left:-56px;width:600px;text-align:right;">12</div>
<div class="t" style="top:495.86px;font-size:13.3px;line-height:16.62px;color:#000000;letter-spacing:-0.2px;left:8px;width:600px;text-align:right;">8</div>
<div class="t" style="top:496.36px;font-size:13.3px;line-height:16.62px;color:#000000;letter-spacing:-0.4px;left:613px;">1312060205990001</div>
<div class="t" style="top:495.86px;font-size:13.3px;line-height:16.62px;color:#000000;letter-spacing:-0.2px;left:744px;">TMI</div>
<div class="t" style="top:495.86px;font-size:13.3px;line-height:16.62px;color:#000000;letter-spacing:-0.2px;left:808px;">TK/0</div>
<svg class="r" style="left:611px;top:492px;" width="7" height="7" viewBox="0 0 7 7"><path d="M0 0h7L0 7z" fill="#1a8a3a"/></svg>
<svg class="r" style="left:1205px;top:492px;" width="7" height="7" viewBox="0 0 7 7"><path d="M0 0h7L0 7z" fill="#1a8a3a"/></svg>
<div class="t" style="top:494.74px;font-size:12.5px;line-height:15.62px;color:#000000;font-weight:bold;letter-spacing:0.25px;left:402.79999999999995px;width:600px;text-align:right;-webkit-text-stroke:0.15px #000;">5.127.000,00</div>
<div class="t" style="top:494.74px;font-size:12.5px;line-height:15.62px;color:#000000;font-weight:bold;letter-spacing:0.25px;left:500.79999999999995px;width:600px;text-align:right;-webkit-text-stroke:0.15px #000;">300.000,00</div>
<div class="t" style="top:494.74px;font-size:12.5px;line-height:15.62px;color:#000000;font-weight:bold;letter-spacing:0.25px;left:598.8px;width:600px;text-align:right;-webkit-text-stroke:0.15px #000;">232.761,12</div>
<div class="t" style="top:495.86px;font-size:13.3px;line-height:16.62px;color:#000000;letter-spacing:-0.28px;left:717px;width:600px;text-align:right;">5.659.761,12</div>
<div class="t" style="top:494.86px;font-size:13.3px;line-height:16.62px;color:#000000;left:1395.5px;">-</div>
<div class="t" style="top:494.74px;font-size:12.5px;line-height:15.62px;color:#000000;font-weight:bold;letter-spacing:0.25px;left:908.8px;width:600px;text-align:right;-webkit-text-stroke:0.15px #000;">28.298,81</div>
<div class="t" style="top:495.86px;font-size:13.3px;line-height:16.62px;color:#000000;letter-spacing:-0.28px;left:1008px;width:600px;text-align:right;">102.537,94</div>
<div class="t" style="top:495.86px;font-size:13.3px;line-height:16.62px;color:#000000;letter-spacing:-0.28px;left:1105px;width:600px;text-align:right;">51.268,97</div>
<div class="t" style="top:494.92px;font-size:11.7px;line-height:14.62px;color:#000000;font-weight:bold;left:1185.7px;width:600px;text-align:right;">-</div>
<div class="t" style="top:494.74px;font-size:12.5px;line-height:15.62px;color:#000000;font-weight:bold;letter-spacing:0.25px;left:1299.8px;width:600px;text-align:right;-webkit-text-stroke:0.15px #000;">896.375,00</div>
<div class="t" style="top:514.70px;font-size:13.3px;line-height:16.62px;color:#000000;letter-spacing:0px;left:136.5px;width:60px;text-align:center;">43</div>
<div class="t" style="top:514.70px;font-size:13.3px;line-height:16.62px;color:#000000;letter-spacing:-0.2px;left:201px;">Dian Candra</div>
<div class="t" style="top:514.70px;font-size:13.3px;line-height:16.62px;color:#000000;letter-spacing:-0.2px;left:-120px;width:600px;text-align:right;">1</div>
<div class="t" style="top:514.70px;font-size:13.3px;line-height:16.62px;color:#000000;letter-spacing:-0.2px;left:-56px;width:600px;text-align:right;">12</div>
<div class="t" style="top:514.70px;font-size:13.3px;line-height:16.62px;color:#000000;letter-spacing:-0.2px;left:8px;width:600px;text-align:right;">12</div>
<div class="t" style="top:515.20px;font-size:13.3px;line-height:16.62px;color:#000000;letter-spacing:-0.4px;left:613px;">3201102805850006</div>
<div class="t" style="top:514.70px;font-size:13.3px;line-height:16.62px;color:#000000;letter-spacing:-0.2px;left:744px;">TMI</div>
<div class="t" style="top:514.70px;font-size:13.3px;line-height:16.62px;color:#000000;letter-spacing:-0.2px;left:808px;">K/1</div>
<svg class="r" style="left:611px;top:513px;" width="7" height="7" viewBox="0 0 7 7"><path d="M0 0h7L0 7z" fill="#1a8a3a"/></svg>
<svg class="r" style="left:1205px;top:513px;" width="7" height="7" viewBox="0 0 7 7"><path d="M0 0h7L0 7z" fill="#1a8a3a"/></svg>
<div class="t" style="top:513.73px;font-size:12.5px;line-height:15.62px;color:#000000;font-weight:bold;letter-spacing:0.25px;left:402.79999999999995px;width:600px;text-align:right;-webkit-text-stroke:0.15px #000;">5.127.000,00</div>
<div class="t" style="top:513.73px;font-size:12.5px;line-height:15.62px;color:#000000;font-weight:bold;letter-spacing:0.25px;left:500.79999999999995px;width:600px;text-align:right;-webkit-text-stroke:0.15px #000;">300.000,00</div>
<div class="t" style="top:513.73px;font-size:12.5px;line-height:15.62px;color:#000000;font-weight:bold;letter-spacing:0.25px;left:595.8px;width:600px;text-align:right;-webkit-text-stroke:0.15px #000;">27.685,24</div>
<div class="t" style="top:514.70px;font-size:13.3px;line-height:16.62px;color:#000000;letter-spacing:-0.28px;left:717px;width:600px;text-align:right;">5.454.685,24</div>
<div class="t" style="top:513.70px;font-size:13.3px;line-height:16.62px;color:#000000;left:1395.5px;">-</div>
<div class="t" style="top:514.70px;font-size:13.3px;line-height:16.62px;color:#000000;letter-spacing:-0.28px;left:1008px;width:600px;text-align:right;">102.537,94</div>
<div class="t" style="top:514.70px;font-size:13.3px;line-height:16.62px;color:#000000;letter-spacing:-0.28px;left:1105px;width:600px;text-align:right;">51.268,97</div>
<div class="t" style="top:513.73px;font-size:12.5px;line-height:15.62px;color:#000000;font-weight:bold;letter-spacing:0.25px;left:1200.8px;width:600px;text-align:right;-webkit-text-stroke:0.15px #000;">5.127.000,00</div>
<div class="t" style="top:513.73px;font-size:12.5px;line-height:15.62px;color:#000000;font-weight:bold;letter-spacing:0.25px;left:1299.8px;width:600px;text-align:right;-webkit-text-stroke:0.15px #000;">300.000,00</div>
<div class="t" style="top:534.14px;font-size:13.3px;line-height:16.62px;color:#000000;letter-spacing:0px;left:136.5px;width:60px;text-align:center;">46</div>
<div class="t" style="top:534.14px;font-size:13.3px;line-height:16.62px;color:#000000;letter-spacing:-0.2px;left:201px;">Taufiq Nur Badrussalam</div>
<div class="t" style="top:534.14px;font-size:13.3px;line-height:16.62px;color:#000000;letter-spacing:-0.2px;left:-120px;width:600px;text-align:right;">5</div>
<div class="t" style="top:534.14px;font-size:13.3px;line-height:16.62px;color:#000000;letter-spacing:-0.2px;left:-56px;width:600px;text-align:right;">12</div>
<div class="t" style="top:534.14px;font-size:13.3px;line-height:16.62px;color:#000000;letter-spacing:-0.2px;left:8px;width:600px;text-align:right;">8</div>
<div class="t" style="top:534.64px;font-size:13.3px;line-height:16.62px;color:#000000;letter-spacing:-0.4px;left:613px;">3329012504010003</div>
<div class="t" style="top:534.14px;font-size:13.3px;line-height:16.62px;color:#000000;letter-spacing:-0.2px;left:744px;">TMI</div>
<div class="t" style="top:534.14px;font-size:13.3px;line-height:16.62px;color:#000000;letter-spacing:-0.2px;left:808px;">TK/0</div>
<svg class="r" style="left:611px;top:531px;" width="7" height="7" viewBox="0 0 7 7"><path d="M0 0h7L0 7z" fill="#1a8a3a"/></svg>
<svg class="r" style="left:1205px;top:531px;" width="7" height="7" viewBox="0 0 7 7"><path d="M0 0h7L0 7z" fill="#1a8a3a"/></svg>
<div class="t" style="top:533.07px;font-size:12.5px;line-height:15.62px;color:#000000;font-weight:bold;letter-spacing:0.25px;left:402.79999999999995px;width:600px;text-align:right;-webkit-text-stroke:0.15px #000;">5.397.000,00</div>
<div class="t" style="top:533.07px;font-size:12.5px;line-height:15.62px;color:#000000;font-weight:bold;letter-spacing:0.25px;left:500.79999999999995px;width:600px;text-align:right;-webkit-text-stroke:0.15px #000;">300.000,00</div>
<div class="t" style="top:533.07px;font-size:12.5px;line-height:15.62px;color:#000000;font-weight:bold;letter-spacing:0.25px;left:595.8px;width:600px;text-align:right;-webkit-text-stroke:0.15px #000;">29.142,51</div>
<div class="t" style="top:534.14px;font-size:13.3px;line-height:16.62px;color:#000000;letter-spacing:-0.28px;left:717px;width:600px;text-align:right;">5.726.142,51</div>
<div class="t" style="top:533.14px;font-size:13.3px;line-height:16.62px;color:#000000;left:1395.5px;">-</div>
<div class="t" style="top:533.07px;font-size:12.5px;line-height:15.62px;color:#000000;font-weight:bold;letter-spacing:0.25px;left:908.8px;width:600px;text-align:right;-webkit-text-stroke:0.15px #000;">28.630,72</div>
<div class="t" style="top:534.14px;font-size:13.3px;line-height:16.62px;color:#000000;letter-spacing:-0.28px;left:1008px;width:600px;text-align:right;">107.935,22</div>
<div class="t" style="top:534.14px;font-size:13.3px;line-height:16.62px;color:#000000;letter-spacing:-0.28px;left:1105px;width:600px;text-align:right;">53.967,61</div>
<div class="t" style="top:533.07px;font-size:12.5px;line-height:15.62px;color:#000000;font-weight:bold;letter-spacing:0.25px;left:1200.8px;width:600px;text-align:right;-webkit-text-stroke:0.15px #000;">5.397.000,00</div>
<div class="t" style="top:533.07px;font-size:12.5px;line-height:15.62px;color:#000000;font-weight:bold;letter-spacing:0.25px;left:1299.8px;width:600px;text-align:right;-webkit-text-stroke:0.15px #000;">2.082.125,00</div>
<div class="t" style="top:554.86px;font-size:13.3px;line-height:16.62px;color:#000000;letter-spacing:0px;left:136.5px;width:60px;text-align:center;">48</div>
<div class="t" style="top:554.86px;font-size:13.3px;line-height:16.62px;color:#000000;letter-spacing:-0.2px;left:201px;">Heri Azhar Ramdhoni</div>
<div class="t" style="top:554.86px;font-size:13.3px;line-height:16.62px;color:#000000;letter-spacing:-0.2px;left:-120px;width:600px;text-align:right;">6</div>
<div class="t" style="top:554.86px;font-size:13.3px;line-height:16.62px;color:#000000;letter-spacing:-0.2px;left:-56px;width:600px;text-align:right;">12</div>
<div class="t" style="top:554.86px;font-size:13.3px;line-height:16.62px;color:#000000;letter-spacing:-0.2px;left:8px;width:600px;text-align:right;">7</div>
<div class="t" style="top:555.36px;font-size:13.3px;line-height:16.62px;color:#000000;letter-spacing:-0.4px;left:613px;">3215081303920009</div>
<div class="t" style="top:554.86px;font-size:13.3px;line-height:16.62px;color:#000000;letter-spacing:-0.2px;left:744px;">TMI</div>
<div class="t" style="top:554.86px;font-size:13.3px;line-height:16.62px;color:#000000;letter-spacing:-0.2px;left:808px;">K/1</div>
<svg class="r" style="left:611px;top:551px;" width="7" height="7" viewBox="0 0 7 7"><path d="M0 0h7L0 7z" fill="#1a8a3a"/></svg>
<svg class="r" style="left:1205px;top:551px;" width="7" height="7" viewBox="0 0 7 7"><path d="M0 0h7L0 7z" fill="#1a8a3a"/></svg>
<div class="t" style="top:553.74px;font-size:12.5px;line-height:15.62px;color:#000000;font-weight:bold;letter-spacing:0.25px;left:402.79999999999995px;width:600px;text-align:right;-webkit-text-stroke:0.15px #000;">5.397.000,00</div>
<div class="t" style="top:553.74px;font-size:12.5px;line-height:15.62px;color:#000000;font-weight:bold;letter-spacing:0.25px;left:500.79999999999995px;width:600px;text-align:right;-webkit-text-stroke:0.15px #000;">1.285.500,00</div>
<div class="t" style="top:553.74px;font-size:12.5px;line-height:15.62px;color:#000000;font-weight:bold;letter-spacing:0.25px;left:598.8px;width:600px;text-align:right;-webkit-text-stroke:0.15px #000;">245.012,95</div>
<div class="t" style="top:554.86px;font-size:13.3px;line-height:16.62px;color:#000000;letter-spacing:-0.28px;left:717px;width:600px;text-align:right;">6.927.512,95</div>
<div class="t" style="top:553.86px;font-size:13.3px;line-height:16.62px;color:#000000;left:1395.5px;">-</div>
<div class="t" style="top:553.74px;font-size:12.5px;line-height:15.62px;color:#000000;font-weight:bold;letter-spacing:0.25px;left:908.8px;width:600px;text-align:right;-webkit-text-stroke:0.15px #000;">51.956,35</div>
<div class="t" style="top:554.86px;font-size:13.3px;line-height:16.62px;color:#000000;letter-spacing:-0.28px;left:1008px;width:600px;text-align:right;">107.935,22</div>
<div class="t" style="top:554.86px;font-size:13.3px;line-height:16.62px;color:#000000;letter-spacing:-0.28px;left:1105px;width:600px;text-align:right;">53.967,61</div>
<div class="t" style="top:553.92px;font-size:11.7px;line-height:14.62px;color:#000000;font-weight:bold;left:1185.7px;width:600px;text-align:right;">-</div>
<div class="t" style="top:553.74px;font-size:12.5px;line-height:15.62px;color:#000000;font-weight:bold;letter-spacing:0.25px;left:1299.8px;width:600px;text-align:right;-webkit-text-stroke:0.15px #000;">140.000,00</div>
<div class="t" style="top:572.98px;font-size:13.3px;line-height:16.62px;color:#000000;letter-spacing:0px;left:136.5px;width:60px;text-align:center;">49</div>
<div class="t" style="top:572.98px;font-size:13.3px;line-height:16.62px;color:#000000;letter-spacing:-0.2px;left:201px;">Dodi Aris Setiawan</div>
<div class="t" style="top:572.98px;font-size:13.3px;line-height:16.62px;color:#000000;letter-spacing:-0.2px;left:-120px;width:600px;text-align:right;">5</div>
<div class="t" style="top:572.98px;font-size:13.3px;line-height:16.62px;color:#000000;letter-spacing:-0.2px;left:-56px;width:600px;text-align:right;">12</div>
<div class="t" style="top:572.98px;font-size:13.3px;line-height:16.62px;color:#000000;letter-spacing:-0.2px;left:8px;width:600px;text-align:right;">8</div>
<div class="t" style="top:573.48px;font-size:13.3px;line-height:16.62px;color:#000000;letter-spacing:-0.4px;left:613px;">3276061308930003</div>
<div class="t" style="top:572.98px;font-size:13.3px;line-height:16.62px;color:#000000;letter-spacing:-0.2px;left:744px;">TMI</div>
<div class="t" style="top:572.98px;font-size:13.3px;line-height:16.62px;color:#000000;letter-spacing:-0.2px;left:808px;">TK/0</div>
<svg class="r" style="left:611px;top:572px;" width="7" height="7" viewBox="0 0 7 7"><path d="M0 0h7L0 7z" fill="#1a8a3a"/></svg>
<svg class="r" style="left:1205px;top:572px;" width="7" height="7" viewBox="0 0 7 7"><path d="M0 0h7L0 7z" fill="#1a8a3a"/></svg>
<div class="t" style="top:572.06px;font-size:12.5px;line-height:15.62px;color:#000000;font-weight:bold;letter-spacing:0.25px;left:402.79999999999995px;width:600px;text-align:right;-webkit-text-stroke:0.15px #000;">5.397.000,00</div>
<div class="t" style="top:572.06px;font-size:12.5px;line-height:15.62px;color:#000000;font-weight:bold;letter-spacing:0.25px;left:500.79999999999995px;width:600px;text-align:right;-webkit-text-stroke:0.15px #000;">1.140.000,00</div>
<div class="t" style="top:572.06px;font-size:12.5px;line-height:15.62px;color:#000000;font-weight:bold;letter-spacing:0.25px;left:595.8px;width:600px;text-align:right;-webkit-text-stroke:0.15px #000;">29.142,51</div>
<div class="t" style="top:572.98px;font-size:13.3px;line-height:16.62px;color:#000000;letter-spacing:-0.28px;left:717px;width:600px;text-align:right;">6.566.142,51</div>
<div class="t" style="top:571.98px;font-size:13.3px;line-height:16.62px;color:#000000;left:1395.5px;">-</div>
<div class="t" style="top:572.06px;font-size:12.5px;line-height:15.62px;color:#000000;font-weight:bold;letter-spacing:0.25px;left:908.8px;width:600px;text-align:right;-webkit-text-stroke:0.15px #000;">65.661,43</div>
<div class="t" style="top:572.98px;font-size:13.3px;line-height:16.62px;color:#000000;letter-spacing:-0.28px;left:1008px;width:600px;text-align:right;">107.935,22</div>
<div class="t" style="top:572.98px;font-size:13.3px;line-height:16.62px;color:#000000;letter-spacing:-0.28px;left:1105px;width:600px;text-align:right;">53.967,61</div>
<div class="t" style="top:572.24px;font-size:11.7px;line-height:14.62px;color:#000000;font-weight:bold;left:1185.7px;width:600px;text-align:right;">-</div>
<div class="t" style="top:572.06px;font-size:12.5px;line-height:15.62px;color:#000000;font-weight:bold;letter-spacing:0.25px;left:1299.8px;width:600px;text-align:right;-webkit-text-stroke:0.15px #000;">2.949.000,00</div>
<div class="t" style="top:589.98px;font-size:13.3px;line-height:16.62px;color:#000000;letter-spacing:0px;left:136.5px;width:60px;text-align:center;">51</div>
<div class="t" style="top:589.98px;font-size:13.3px;line-height:16.62px;color:#000000;letter-spacing:-0.2px;left:201px;">Fahrezy Aldi Permana</div>
<div class="t" style="top:589.98px;font-size:13.3px;line-height:16.62px;color:#000000;letter-spacing:-0.2px;left:-120px;width:600px;text-align:right;">9</div>
<div class="t" style="top:589.98px;font-size:13.3px;line-height:16.62px;color:#000000;letter-spacing:-0.2px;left:-56px;width:600px;text-align:right;">12</div>
<div class="t" style="top:589.98px;font-size:13.3px;line-height:16.62px;color:#000000;letter-spacing:-0.2px;left:8px;width:600px;text-align:right;">4</div>
<div class="t" style="top:590.48px;font-size:13.3px;line-height:16.62px;color:#000000;letter-spacing:-0.4px;left:613px;">3276061008000002</div>
<div class="t" style="top:589.98px;font-size:13.3px;line-height:16.62px;color:#000000;letter-spacing:-0.2px;left:744px;">TMI</div>
<div class="t" style="top:589.98px;font-size:13.3px;line-height:16.62px;color:#000000;letter-spacing:-0.2px;left:808px;">TK/0</div>
<svg class="r" style="left:611px;top:589px;" width="7" height="7" viewBox="0 0 7 7"><path d="M0 0h7L0 7z" fill="#1a8a3a"/></svg>
<svg class="r" style="left:1205px;top:589px;" width="7" height="7" viewBox="0 0 7 7"><path d="M0 0h7L0 7z" fill="#1a8a3a"/></svg>
<div class="t" style="top:589.06px;font-size:12.5px;line-height:15.62px;color:#000000;font-weight:bold;letter-spacing:0.25px;left:402.79999999999995px;width:600px;text-align:right;-webkit-text-stroke:0.15px #000;">5.397.000,00</div>
<div class="t" style="top:589.06px;font-size:12.5px;line-height:15.62px;color:#000000;font-weight:bold;letter-spacing:0.25px;left:500.79999999999995px;width:600px;text-align:right;-webkit-text-stroke:0.15px #000;">400.000,00</div>
<div class="t" style="top:589.06px;font-size:12.5px;line-height:15.62px;color:#000000;font-weight:bold;letter-spacing:0.25px;left:598.8px;width:600px;text-align:right;-webkit-text-stroke:0.15px #000;">245.012,95</div>
<div class="t" style="top:589.98px;font-size:13.3px;line-height:16.62px;color:#000000;letter-spacing:-0.28px;left:717px;width:600px;text-align:right;">6.042.012,95</div>
<div class="t" style="top:588.98px;font-size:13.3px;line-height:16.62px;color:#000000;left:1395.5px;">-</div>
<div class="t" style="top:589.06px;font-size:12.5px;line-height:15.62px;color:#000000;font-weight:bold;letter-spacing:0.25px;left:908.8px;width:600px;text-align:right;-webkit-text-stroke:0.15px #000;">45.315,10</div>
<div class="t" style="top:589.98px;font-size:13.3px;line-height:16.62px;color:#000000;letter-spacing:-0.28px;left:1008px;width:600px;text-align:right;">107.935,22</div>
<div class="t" style="top:589.98px;font-size:13.3px;line-height:16.62px;color:#000000;letter-spacing:-0.28px;left:1105px;width:600px;text-align:right;">53.967,61</div>
<div class="t" style="top:589.06px;font-size:12.5px;line-height:15.62px;color:#000000;font-weight:bold;letter-spacing:0.25px;left:1200.8px;width:600px;text-align:right;-webkit-text-stroke:0.15px #000;">5.397.000,00</div>
<div class="t" style="top:589.06px;font-size:12.5px;line-height:15.62px;color:#000000;font-weight:bold;letter-spacing:0.25px;left:1299.8px;width:600px;text-align:right;-webkit-text-stroke:0.15px #000;">2.010.000,00</div>
<div class="t" style="top:609.86px;font-size:13.3px;line-height:16.62px;color:#000000;letter-spacing:0px;left:136.5px;width:60px;text-align:center;">104</div>
<div class="t" style="top:609.86px;font-size:13.3px;line-height:16.62px;color:#000000;letter-spacing:-0.2px;left:201px;">Yudha Manggala Alaondo</div>
<div class="t" style="top:609.86px;font-size:13.3px;line-height:16.62px;color:#000000;letter-spacing:-0.2px;left:-120px;width:600px;text-align:right;">1</div>
<div class="t" style="top:609.86px;font-size:13.3px;line-height:16.62px;color:#000000;letter-spacing:-0.2px;left:-56px;width:600px;text-align:right;">11</div>
<div class="t" style="top:609.86px;font-size:13.3px;line-height:16.62px;color:#000000;letter-spacing:-0.2px;left:8px;width:600px;text-align:right;">11</div>
<div class="t" style="top:610.36px;font-size:13.3px;line-height:16.62px;color:#000000;letter-spacing:-0.4px;left:613px;">3216053008960004</div>
<div class="t" style="top:609.86px;font-size:13.3px;line-height:16.62px;color:#000000;letter-spacing:-0.2px;left:744px;">TMI</div>
<div class="t" style="top:609.86px;font-size:13.3px;line-height:16.62px;color:#000000;letter-spacing:-0.2px;left:808px;">K/2</div>
<svg class="r" style="left:611px;top:606px;" width="7" height="7" viewBox="0 0 7 7"><path d="M0 0h7L0 7z" fill="#1a8a3a"/></svg>
<div class="t" style="top:608.74px;font-size:12.5px;line-height:15.62px;color:#000000;font-weight:bold;letter-spacing:0.25px;left:402.79999999999995px;width:600px;text-align:right;-webkit-text-stroke:0.15px #000;">5.541.066,67</div>
<div class="t" style="top:608.74px;font-size:12.5px;line-height:15.62px;color:#000000;font-weight:bold;letter-spacing:0.25px;left:500.79999999999995px;width:600px;text-align:right;-webkit-text-stroke:0.15px #000;">2.504.000,00</div>
<div class="t" style="top:608.74px;font-size:12.5px;line-height:15.62px;color:#000000;font-weight:bold;letter-spacing:0.25px;left:598.8px;width:600px;text-align:right;-webkit-text-stroke:0.15px #000;">245.012,95</div>
<div class="t" style="top:609.86px;font-size:13.3px;line-height:16.62px;color:#000000;letter-spacing:-0.28px;left:717px;width:600px;text-align:right;">8.290.079,62</div>
<div class="t" style="top:608.86px;font-size:13.3px;line-height:16.62px;color:#000000;left:1395.5px;">-</div>
<div class="t" style="top:608.74px;font-size:12.5px;line-height:15.62px;color:#000000;font-weight:bold;letter-spacing:0.25px;left:908.8px;width:600px;text-align:right;-webkit-text-stroke:0.15px #000;">82.900,80</div>
<div class="t" style="top:609.86px;font-size:13.3px;line-height:16.62px;color:#000000;letter-spacing:-0.28px;left:1008px;width:600px;text-align:right;">107.935,22</div>
<div class="t" style="top:609.86px;font-size:13.3px;line-height:16.62px;color:#000000;letter-spacing:-0.28px;left:1105px;width:600px;text-align:right;">53.967,61</div>
<svg class="r" style="left:806px;top:551px;" width="7" height="7" viewBox="0 0 7 7"><path d="M0 0h7L0 7z" fill="#1a8a3a"/></svg>
<svg class="r" style="left:1205px;top:606px;" width="7" height="7" viewBox="0 0 7 7"><path d="M0 0h7L0 7z" fill="#1a8a3a"/></svg>
<div class="t" style="top:433.18px;font-size:13.3px;line-height:16.62px;color:#000000;letter-spacing:0px;left:163.5px;">1</div>
<div class="t" style="top:433.18px;font-size:13.3px;line-height:16.62px;color:#000000;letter-spacing:-0.3px;left:201px;">NAMA</div>
<div class="t" style="top:410.84px;font-size:12px;line-height:15.0px;color:#000000;font-weight:bold;letter-spacing:0.6px;left:427.5px;width:54.5px;overflow:hidden;">Awal kerja</div>
<div class="t" style="top:410.84px;font-size:12px;line-height:15.0px;color:#000000;font-weight:bold;letter-spacing:0.6px;left:492px;width:54px;overflow:hidden;">akhi kerja</div>
<div class="t" style="top:410.84px;font-size:12px;line-height:15.0px;color:#000000;font-weight:bold;letter-spacing:0.6px;left:555.5px;width:54.5px;overflow:hidden;">Bulan bekerja</div>
<div class="t" style="top:410.84px;font-size:12px;line-height:15.0px;color:#000000;font-weight:bold;letter-spacing:0.6px;left:619.5px;">NIK</div>
<div class="t" style="top:410.84px;font-size:12px;line-height:15.0px;color:#000000;font-weight:bold;letter-spacing:0.3px;left:751px;">OS</div>
<div class="t" style="top:410.84px;font-size:12px;line-height:15.0px;color:#000000;font-weight:bold;letter-spacing:0.1px;left:815px;">PTKP</div>
<div class="t" style="top:410.84px;font-size:12px;line-height:15.0px;color:#000000;font-weight:bold;letter-spacing:0.6px;left:878.5px;">Gaji</div>
<div class="t" style="top:402.84px;font-size:12px;line-height:15.0px;color:#000000;font-weight:bold;letter-spacing:0.6px;left:1018px;">Tunjangan</div>
<div class="t" style="top:418.84px;font-size:12px;line-height:15.0px;color:#000000;font-weight:bold;letter-spacing:0.6px;left:1013.5px;">Lain</div>
<div class="t" style="top:410.84px;font-size:12px;line-height:15.0px;color:#000000;font-weight:bold;letter-spacing:0.6px;left:1114px;width:90px;overflow:hidden;">Ass. dtg perusahaan</div>
<div class="t" style="top:410.84px;font-size:12px;line-height:15.0px;color:#000000;font-weight:bold;letter-spacing:0.6px;left:1212.5px;">Jumlah</div>
<div class="t" style="top:410.84px;font-size:12px;line-height:15.0px;color:#000000;font-weight:bold;letter-spacing:0.6px;left:1330.5px;">Bonus/THR</div>
<div class="t" style="top:402.84px;font-size:12px;line-height:15.0px;color:#000000;font-weight:bold;letter-spacing:0.3px;left:1427px;">PPh Psl 21</div>
<div class="t" style="top:418.84px;font-size:12px;line-height:15.0px;color:#000000;font-weight:bold;letter-spacing:0.6px;left:1424.5px;">dipotong</div>
<div class="t" style="top:433.18px;font-size:13.3px;line-height:16.62px;color:#000000;letter-spacing:-0.3px;left:1523px;">JHT</div>
<div class="t" style="top:433.18px;font-size:13.3px;line-height:16.62px;color:#000000;letter-spacing:-0.3px;left:1620px;">JP</div>
<div class="t" style="top:410.84px;font-size:12px;line-height:15.0px;color:#000000;font-weight:bold;letter-spacing:0.6px;left:1720px;">Gaji</div>
<div class="t" style="top:402.84px;font-size:12px;line-height:15.0px;color:#000000;font-weight:bold;letter-spacing:0.6px;left:1815px;">Tunjangan</div>
<div class="t" style="top:418.84px;font-size:12px;line-height:15.0px;color:#000000;font-weight:bold;letter-spacing:0.6px;left:1812px;">Lain</div>
<div class="r" style="left:181.5px;top:432px;width:16px;height:16px;background:#f7f7f7;box-shadow:inset -1px -1px 0 #c8c8c8;"></div>
<svg class="r" style="left:181.5px;top:432px;" width="16" height="16" viewBox="0 0 16 16"><path d="M4.5 6h7l-3.5 4z" fill="#5a5a5a"/></svg>
<div class="r" style="left:401px;top:432px;width:16px;height:16px;background:#f7f7f7;box-shadow:inset -1px -1px 0 #c8c8c8;"></div>
<svg class="r" style="left:401px;top:432px;" width="16" height="16" viewBox="0 0 16 16"><path d="M4.5 6h7l-3.5 4z" fill="#5a5a5a"/></svg>
<div class="r" style="left:465px;top:432px;width:16px;height:16px;background:#f7f7f7;box-shadow:inset -1px -1px 0 #c8c8c8;"></div>
<svg class="r" style="left:465px;top:432px;" width="16" height="16" viewBox="0 0 16 16"><path d="M6 4h8l-3 4v5h-2V8z" fill="#5a5a5a"/><path d="M2 10.5h5l-2.5 2.5z" fill="#5a5a5a"/></svg>
<div class="r" style="left:529px;top:432px;width:16px;height:16px;background:#f7f7f7;box-shadow:inset -1px -1px 0 #c8c8c8;"></div>
<svg class="r" style="left:529px;top:432px;" width="16" height="16" viewBox="0 0 16 16"><path d="M6 4h8l-3 4v5h-2V8z" fill="#5a5a5a"/><path d="M2 10.5h5l-2.5 2.5z" fill="#5a5a5a"/></svg>
<div class="r" style="left:593.5px;top:432px;width:16px;height:16px;background:#f7f7f7;box-shadow:inset -1px -1px 0 #c8c8c8;"></div>
<svg class="r" style="left:593.5px;top:432px;" width="16" height="16" viewBox="0 0 16 16"><path d="M4.5 6h7l-3.5 4z" fill="#5a5a5a"/></svg>
<div class="r" style="left:724px;top:432px;width:16px;height:16px;background:#f7f7f7;box-shadow:inset -1px -1px 0 #c8c8c8;"></div>
<svg class="r" style="left:724px;top:432px;" width="16" height="16" viewBox="0 0 16 16"><path d="M4.5 6h7l-3.5 4z" fill="#5a5a5a"/></svg>
<div class="r" style="left:788px;top:432px;width:16px;height:16px;background:#f7f7f7;box-shadow:inset -1px -1px 0 #c8c8c8;"></div>
<svg class="r" style="left:788px;top:432px;" width="16" height="16" viewBox="0 0 16 16"><path d="M4.5 6h7l-3.5 4z" fill="#5a5a5a"/></svg>
<div class="r" style="left:852px;top:432px;width:16px;height:16px;background:#f7f7f7;box-shadow:inset -1px -1px 0 #c8c8c8;"></div>
<svg class="r" style="left:852px;top:432px;" width="16" height="16" viewBox="0 0 16 16"><path d="M4.5 6h7l-3.5 4z" fill="#5a5a5a"/></svg>
<div class="r" style="left:993px;top:432px;width:16px;height:16px;background:#f7f7f7;box-shadow:inset -1px -1px 0 #c8c8c8;"></div>
<svg class="r" style="left:993px;top:432px;" width="16" height="16" viewBox="0 0 16 16"><path d="M4.5 6h7l-3.5 4z" fill="#5a5a5a"/></svg>
<div class="r" style="left:1090px;top:432px;width:16px;height:16px;background:#f7f7f7;box-shadow:inset -1px -1px 0 #c8c8c8;"></div>
<svg class="r" style="left:1090px;top:432px;" width="16" height="16" viewBox="0 0 16 16"><path d="M4.5 6h7l-3.5 4z" fill="#5a5a5a"/></svg>
<div class="r" style="left:1187px;top:432px;width:16px;height:16px;background:#f7f7f7;box-shadow:inset -1px -1px 0 #c8c8c8;"></div>
<svg class="r" style="left:1187px;top:432px;" width="16" height="16" viewBox="0 0 16 16"><path d="M4.5 6h7l-3.5 4z" fill="#5a5a5a"/></svg>
<div class="r" style="left:1306px;top:432px;width:16px;height:16px;background:#f7f7f7;box-shadow:inset -1px -1px 0 #c8c8c8;"></div>
<svg class="r" style="left:1306px;top:432px;" width="16" height="16" viewBox="0 0 16 16"><path d="M4.5 6h7l-3.5 4z" fill="#5a5a5a"/></svg>
<div class="r" style="left:1403px;top:432px;width:16px;height:16px;background:#f7f7f7;box-shadow:inset -1px -1px 0 #c8c8c8;"></div>
<svg class="r" style="left:1403px;top:432px;" width="16" height="16" viewBox="0 0 16 16"><path d="M4.5 6h7l-3.5 4z" fill="#5a5a5a"/></svg>
<div class="r" style="left:1500px;top:432px;width:16px;height:16px;background:#f7f7f7;box-shadow:inset -1px -1px 0 #c8c8c8;"></div>
<svg class="r" style="left:1500px;top:432px;" width="16" height="16" viewBox="0 0 16 16"><path d="M6 4h8l-3 4v5h-2V8z" fill="#5a5a5a"/><path d="M2 10.5h5l-2.5 2.5z" fill="#5a5a5a"/></svg>
<div class="r" style="left:1597px;top:432px;width:16px;height:16px;background:#f7f7f7;box-shadow:inset -1px -1px 0 #c8c8c8;"></div>
<svg class="r" style="left:1597px;top:432px;" width="16" height="16" viewBox="0 0 16 16"><path d="M4.5 6h7l-3.5 4z" fill="#5a5a5a"/></svg>
<div class="r" style="left:1694px;top:432px;width:16px;height:16px;background:#f7f7f7;box-shadow:inset -1px -1px 0 #c8c8c8;"></div>
<svg class="r" style="left:1694px;top:432px;" width="16" height="16" viewBox="0 0 16 16"><path d="M4.5 6h7l-3.5 4z" fill="#5a5a5a"/></svg>
<div class="r" style="left:1791px;top:432px;width:16px;height:16px;background:#f7f7f7;box-shadow:inset -1px -1px 0 #c8c8c8;"></div>
<svg class="r" style="left:1791px;top:432px;" width="16" height="16" viewBox="0 0 16 16"><path d="M4.5 6h7l-3.5 4z" fill="#5a5a5a"/></svg>
<div class="r" style="left:1888px;top:432px;width:16px;height:16px;background:#f7f7f7;box-shadow:inset -1px -1px 0 #c8c8c8;"></div>
<svg class="r" style="left:1888px;top:432px;" width="16" height="16" viewBox="0 0 16 16"><path d="M4.5 6h7l-3.5 4z" fill="#5a5a5a"/></svg>
<div class="t" style="top:695.28px;font-size:13.3px;line-height:16.62px;color:#000000;letter-spacing:-0.28px;left:1007.5px;width:600px;text-align:right;">2.930.000,00</div>
<div class="r" style="left:1516px;top:693px;width:100px;height:20px;background:transparent;border:2px solid #1f6b43;box-sizing:border-box;"></div>
<div class="r" style="left:1611px;top:708px;width:7px;height:7px;background:#ffffff;"></div>
<div class="r" style="left:1612px;top:709px;width:5px;height:5px;background:#1f6b43;"></div>
<div class="r" style="left:1898px;top:257px;width:22px;height:721px;background:#171615;"></div>
<svg class="r" style="left:1904px;top:263px;" width="11" height="8" viewBox="0 0 11 8"><path d="M1 7.5l4.5-6.5 4.5 6.5z" fill="#9a9a9a"/></svg>
<div class="r" style="left:1905px;top:276px;width:9px;height:684px;background:#a0a0a0;border-radius:4.5px;"></div>
<svg class="r" style="left:1904px;top:967px;" width="11" height="8" viewBox="0 0 11 8"><path d="M1 0.5l4.5 6.5 4.5-6.5z" fill="#9a9a9a"/></svg>
<div class="r" style="left:1100px;top:978px;width:230px;height:10px;background:#ffffff;"></div>
<div class="r" style="left:0px;top:978px;width:1116px;height:32px;background:#0f0c0b;border-top-right-radius:7px;"></div>
<div class="r" style="left:1317px;top:978px;width:603px;height:32px;background:#0f0c0b;border-top-left-radius:7px;"></div>
<div class="r" style="left:1100px;top:1000px;width:230px;height:10px;background:#0f0c0b;"></div>
<div class="r" style="left:0px;top:1009px;width:1920px;height:1px;background:#2a2a2a;"></div>
<svg class="r" style="left:27px;top:988px;" width="10" height="12" viewBox="0 0 10 12"><path d="M7 1.5L2.5 6 7 10.5" fill="none" stroke="#8a8a8a" stroke-width="1.3"/></svg>
<svg class="r" style="left:59px;top:988px;" width="10" height="12" viewBox="0 0 10 12"><path d="M3 1.5L7.5 6 3 10.5" fill="none" stroke="#d0d0d0" stroke-width="1.3"/></svg>
<div class="t" style="top:986.56px;font-size:12.8px;line-height:16.0px;color:#f2f2f2;left:-22.5px;width:300px;text-align:center;">8</div>
<div class="t" style="top:986.56px;font-size:12.8px;line-height:16.0px;color:#f2f2f2;left:10.25px;width:300px;text-align:center;">9</div>
<div class="t" style="top:986.56px;font-size:12.8px;line-height:16.0px;color:#f2f2f2;left:67.5px;width:300px;text-align:center;">JAN-MEI</div>
<div class="t" style="top:986.56px;font-size:12.8px;line-height:16.0px;color:#f2f2f2;left:161.75px;width:300px;text-align:center;">8. CORETAX</div>
<div class="t" style="top:986.56px;font-size:12.8px;line-height:16.0px;color:#f2f2f2;left:258.25px;width:300px;text-align:center;">11. RESIGN</div>
<div class="t" style="top:986.56px;font-size:12.8px;line-height:16.0px;color:#f2f2f2;left:357.0px;width:300px;text-align:center;">12. GAJI CBN</div>
<div class="t" style="top:986.56px;font-size:12.8px;line-height:16.0px;color:#f2f2f2;left:513.75px;width:300px;text-align:center;">12. INSENTIF PERFORMANCE</div>
<div class="t" style="top:986.56px;font-size:12.8px;line-height:16.0px;color:#f2f2f2;left:692.25px;width:300px;text-align:center;">12. INSENTIF SALES</div>
<div class="t" style="top:986.56px;font-size:12.8px;line-height:16.0px;color:#f2f2f2;left:863.0px;width:300px;text-align:center;">12. GAJI CBN (DATA BARU)</div>
<div class="r" style="left:144.5px;top:985px;width:1px;height:20px;background:#4a4a4a;"></div>
<div class="r" style="left:177.5px;top:985px;width:1px;height:20px;background:#4a4a4a;"></div>
<div class="r" style="left:261.5px;top:985px;width:1px;height:20px;background:#4a4a4a;"></div>
<div class="r" style="left:362.5px;top:985px;width:1px;height:20px;background:#4a4a4a;"></div>
<div class="r" style="left:454.5px;top:985px;width:1px;height:20px;background:#4a4a4a;"></div>
<div class="r" style="left:561px;top:985px;width:1px;height:20px;background:#4a4a4a;"></div>
<div class="r" style="left:768.5px;top:985px;width:1px;height:20px;background:#4a4a4a;"></div>
<div class="r" style="left:916px;top:985px;width:1px;height:20px;background:#4a4a4a;"></div>
<div class="r" style="left:1111.5px;top:985px;width:1px;height:20px;background:#4a4a4a;"></div>
<div class="r" style="left:1116px;top:975px;width:201px;height:31px;background:linear-gradient(180deg,#fbfdfa 0%,#f3f9ef 60%,#e6f4df 100%);border-radius:0 0 7px 7px;"></div>
<div class="t" style="top:983.27px;font-size:13.1px;line-height:16.38px;color:#1a2a1c;left:1116.5px;width:200px;text-align:center;-webkit-text-stroke:0.25px #1a2a1c;">JAN - DESEMBER FINAL 2025</div>
<div class="r" style="left:1124px;top:1001px;width:185px;height:2px;background:#217a3a;"></div>
<div class="r" style="left:1124px;top:1003px;width:185px;height:1px;background:#a8dca8;"></div>
<div class="r" style="left:1321px;top:985px;width:1px;height:20px;background:#4a4a4a;"></div>
<div class="r" style="left:1325.5px;top:983px;width:257px;height:23px;background:#7ed957;border-radius:3px;"></div>
<div class="t" style="top:986.61px;font-size:12.75px;line-height:15.94px;color:#122a10;left:1324.8px;width:260px;text-align:center;">JAN - DESEMBER PPH SETAHUN FINA</div>
<div class="r" style="left:1587px;top:985px;width:1px;height:20px;background:#4a4a4a;"></div>
<div class="t" style="top:986.79px;font-size:13.6px;line-height:17.0px;color:#f2f2f2;left:1602px;width:26px;overflow:hidden;">valic</div>
<div class="r" style="left:1637px;top:992px;width:2.5px;height:2.5px;background:#e0e0e0;"></div>
<div class="r" style="left:1641px;top:992px;width:2.5px;height:2.5px;background:#e0e0e0;"></div>
<div class="r" style="left:1645px;top:992px;width:2.5px;height:2.5px;background:#e0e0e0;"></div>
<svg class="r" style="left:1667px;top:986px;" width="14" height="14" viewBox="0 0 14 14"><path d="M7 1v12M1 7h12" stroke="#e0e0e0" stroke-width="1.2"/></svg>
<div class="r" style="left:1705.5px;top:989px;width:2px;height:2px;background:#e0e0e0;"></div>
<div class="r" style="left:1705.5px;top:993px;width:2px;height:2px;background:#e0e0e0;"></div>
<div class="r" style="left:1705.5px;top:997px;width:2px;height:2px;background:#e0e0e0;"></div>
<svg class="r" style="left:1726px;top:988px;" width="9" height="12" viewBox="0 0 9 12"><path d="M8 1L2 6l6 5z" fill="#8a8a8a"/></svg>
<div class="r" style="left:1741px;top:990px;width:17px;height:8px;background:#8a8a8a;border-radius:4px;"></div>
<svg class="r" style="left:1886px;top:988px;" width="9" height="12" viewBox="0 0 9 12"><path d="M1 1l6 5-6 5z" fill="#8a8a8a"/></svg>
<div class="r" style="left:0px;top:1010px;width:1920px;height:22px;background:#151312;"></div>
<div class="t" style="top:1016.11px;font-size:11px;line-height:13.75px;color:#eaeaea;left:11px;">Ready</div>
<div class="t" style="top:1014.73px;font-size:11.6px;line-height:14.5px;color:#eaeaea;left:58.3px;">Filter Mode</div>
<div class="t" style="top:1016.01px;font-size:11.1px;line-height:13.88px;color:#eaeaea;left:133.3px;">Calculate</div>
<svg class="r" style="left:199px;top:1013px;" width="15" height="16" viewBox="0 0 15 16"><circle cx="7" cy="2.8" r="1.8" fill="none" stroke="#e0e0e0" stroke-width="1.1"/><path d="M1 6h12M7 6v4l-3 5M7 10l3 5" fill="none" stroke="#e0e0e0" stroke-width="1.1"/><path d="M9 10l5 5M14 10l-5 5" stroke="#e0e0e0" stroke-width="1.1"/></svg>
<div class="t" style="top:1014.81px;font-size:11px;line-height:13.75px;color:#f2f2f2;font-weight:bold;letter-spacing:-0.15px;left:218.3px;">Accessibility: Investigate</div>
<div class="r" style="left:1621px;top:1010px;width:39px;height:22px;background:#2a2a2a;"></div>
<svg class="r" style="left:1632px;top:1013px;" width="16" height="16" viewBox="0 0 16 16"><rect x="0.6" y="0.6" width="14" height="14" fill="none" stroke="#e0e0e0" stroke-width="1.1"/><path d="M5.3 0.6v14M10 0.6v14M0.6 5.3h14M0.6 10h14" stroke="#e0e0e0" stroke-width="1"/></svg>
<svg class="r" style="left:1672px;top:1013px;" width="16" height="16" viewBox="0 0 16 16"><rect x="0.6" y="0.6" width="14" height="14" fill="none" stroke="#e0e0e0" stroke-width="1.1"/><rect x="3.5" y="3" width="8" height="9.5" fill="none" stroke="#e0e0e0" stroke-width="1"/><path d="M5 5.5h5M5 7.5h5M5 9.5h5" stroke="#e0e0e0" stroke-width="0.8"/></svg>
<svg class="r" style="left:1712px;top:1013px;" width="16" height="16" viewBox="0 0 16 16"><rect x="0.6" y="0.6" width="14" height="14" fill="none" stroke="#e0e0e0" stroke-width="1.1"/><path d="M7.5 0.6v7H5v-7" fill="none" stroke="#e0e0e0" stroke-width="1"/></svg>
<div class="r" style="left:1745px;top:1020.5px;width:8px;height:1.2px;background:#e0e0e0;"></div>
<div class="r" style="left:1760px;top:1020.5px;width:98px;height:1px;background:#9a9a9a;"></div>
<div class="r" style="left:1806px;top:1014px;width:5px;height:13px;background:#bdbdbd;border-radius:1px;"></div>
<svg class="r" style="left:1862px;top:1015px;" width="12" height="12" viewBox="0 0 12 12"><path d="M6 1v10M1 6h10" stroke="#e0e0e0" stroke-width="1.1"/></svg>
<div class="t" style="top:1014.33px;font-size:11.5px;line-height:14.38px;color:#eaeaea;left:1885px;">100%</div>
<div class="r" style="left:0px;top:1032px;width:1920px;height:48px;background:linear-gradient(90deg,#1d1b1a 0%,#201d1b 30%,#221e1b 60%,#1f2226 88%,#2a231a 100%);"></div>
<div class="r" style="left:0px;top:1032px;width:1920px;height:1px;background:#2e2c2a;"></div>
<svg class="r" style="left:17px;top:1037px;" width="32" height="32" viewBox="0 0 32 32"><ellipse cx="14" cy="24" rx="11" ry="5" fill="#a9c8ec"/><circle cx="12" cy="20" r="6" fill="#c6dcf6"/><circle cx="19" cy="21" r="5" fill="#b5d0f0"/><circle cx="22" cy="8" r="7.5" fill="#f08a8a"/><text x="22" y="11.5" font-size="10" fill="#2a0a0a" text-anchor="middle" font-family="Liberation Sans">6</text></svg>
<div class="t" style="top:1040.92px;font-size:11.4px;line-height:14.25px;color:#f2f2f2;left:50.5px;">30°C</div>
<div class="t" style="top:1057.42px;font-size:11.4px;line-height:14.25px;color:#d8d8d8;left:50.5px;">Berawan</div>
<svg class="r" style="left:638px;top:1044px;" width="25" height="25" viewBox="0 0 25 25"><rect x="0" y="0" width="11.5" height="11.5" fill="#3fb4f2"/><rect x="12.5" y="0" width="11.5" height="11.5" fill="#5ac8fa"/><rect x="0" y="12.5" width="11.5" height="11.5" fill="#2a9de3"/><rect x="12.5" y="12.5" width="11.5" height="11.5" fill="#49bbf5"/></svg>
<div class="r" style="left:675px;top:1040px;width:220px;height:32px;background:linear-gradient(90deg,#3e3935 0%,#423b36 55%,#4d4137 100%);border-radius:16px;box-shadow:inset 0 0 0 1px #57504a;"></div>
<svg class="r" style="left:685px;top:1047px;" width="17" height="17" viewBox="0 0 17 17"><circle cx="7" cy="7" r="5.5" fill="none" stroke="#e0e0e0" stroke-width="1.5"/><path d="M11 11l4.5 4.5" stroke="#e0e0e0" stroke-width="1.6"/></svg>
<div class="t" style="top:1048.66px;font-size:12.7px;line-height:15.88px;color:#d8d8d8;left:712.3px;">Search</div>
<svg class="r" style="left:845px;top:1041px;" width="48" height="30" viewBox="0 0 48 30"><ellipse cx="26" cy="25.5" rx="20" ry="3" fill="#e6d2aa"/><path d="M14 10c3-2 14-2 20 0 2 1 3 3 3 6l-1 3h-1l0-3-2 1 0 8h-1.5l-0.5-7h-9l-1 7h-1.5l0-7-3-2-1 9h-1.5l0-9c-2-1-3-3-3-5z" fill="#d8d8e8"/><path d="M8 4l3 1 4 5-2 2-5-4z" fill="#d8d8e8"/><path d="M17 9l1 8M20 9l0.5 8M23 9v8M26 9l-0.5 8M29 9l-1 8M32 10l-1.5 7M11 6l2 3" stroke="#5a5478" stroke-width="1.3"/></svg>
<svg class="r" style="left:906px;top:1045px;" width="26" height="24" viewBox="0 0 26 24"><rect x="1" y="9" width="14" height="14" rx="1" fill="#6a6a6a"/><rect x="10" y="1" width="15" height="15" rx="1" fill="#e6e6e6"/><rect x="10" y="9" width="5" height="7" fill="#b0b0b0"/></svg>
<svg class="r" style="left:950px;top:1045px;" width="26" height="23" viewBox="0 0 26 23"><path d="M1 3h9l2 2h13v16H1z" fill="#f0b400"/><rect x="1" y="8" width="24" height="14" rx="1" fill="#ffd54a"/><rect x="7" y="15" width="12" height="7" rx="1.5" fill="#1f77d0"/></svg>
<div class="r" style="left:960px;top:1072px;width:6px;height:3px;background:#9a9a9a;border-radius:2px;"></div>
<svg class="r" style="left:994px;top:1044px;" width="26" height="26" viewBox="0 0 26 26"><defs><linearGradient id="eg" x1="0" y1="1" x2="1" y2="0"><stop offset="0" stop-color="#0c59a4"/><stop offset="0.5" stop-color="#1d8ce0"/><stop offset="1" stop-color="#5bd86a"/></linearGradient></defs><circle cx="13" cy="13" r="12" fill="url(#eg)"/><path d="M4 17c1-7 8-10 13-8 4 1.5 5 5 3 7-2 1.5-5 1-6-1" fill="none" stroke="#0f4f8f" stroke-width="2.2"/><circle cx="14.5" cy="14.5" r="3.2" fill="#231d1a"/></svg>
<svg class="r" style="left:1038px;top:1043px;" width="25" height="26" viewBox="0 0 25 26"><path d="M7 6a5.5 5 0 0 1 11 0" fill="none" stroke="#3aa0e8" stroke-width="1.8"/><rect x="1" y="6" width="23" height="19" rx="3" fill="#f4f4f4"/><rect x="8" y="11" width="4" height="4" fill="#f25022"/><rect x="13" y="11" width="4" height="4" fill="#7fba00"/><rect x="8" y="16" width="4" height="4" fill="#00a4ef"/><rect x="13" y="16" width="4" height="4" fill="#ffb900"/></svg>
<svg class="r" style="left:1082px;top:1044px;" width="26" height="26" viewBox="0 0 26 26"><path d="M13 2a11 11 0 0 0-9.5 16.5L2 24l5.7-1.5A11 11 0 1 0 13 2z" fill="none" stroke="#25d366" stroke-width="2.4"/><path d="M9 8c-1 1-1 3 1 6s5 4 6 3l1-1.5-2.5-1.5-1 1c-1 0-3-2-3.5-3l1-1L10 8z" fill="#25d366"/></svg>
<svg class="r" style="left:1127px;top:1044px;" width="25" height="25" viewBox="0 0 25 25"><circle cx="12.5" cy="12.5" r="12" fill="#db4437"/><path d="M12.5 12.5L2.1 6.5A12 12 0 0 0 6.5 22.9z" fill="#0f9d58"/><path d="M12.5 12.5L6.5 22.9A12 12 0 0 0 24.5 12.5z" fill="#ffcd40"/><path d="M12.5 12.5H24.5A12 12 0 0 0 22.9 6.5z" fill="#db4437"/><circle cx="12.5" cy="12.5" r="5.5" fill="#fff"/><circle cx="12.5" cy="12.5" r="4.3" fill="#4285f4"/></svg>
<div class="r" style="left:1136px;top:1072px;width:6px;height:3px;background:#9a9a9a;border-radius:2px;"></div>
<svg class="r" style="left:1170px;top:1044px;" width="25" height="25" viewBox="0 0 25 25"><circle cx="12.5" cy="12.5" r="12" fill="#e8344a"/><path d="M7 19l5.5-13 5.5 13" fill="none" stroke="#fff" stroke-width="2.2"/></svg>
<svg class="r" style="left:1215px;top:1045px;" width="24" height="23" viewBox="0 0 24 23"><rect x="0" y="0" width="24" height="23" rx="1" fill="#ef443b"/><path d="M6 11.5l4-4 4 4-4 4z" fill="#fff"/><path d="M12 7.5l4 4-4 4" fill="none" stroke="#fff" stroke-width="2"/></svg>
<div class="r" style="left:1251px;top:1037px;width:40px;height:39px;background:#3a3634;border-radius:5px;"></div>
<svg class="r" style="left:1257px;top:1045px;" width="25" height="24" viewBox="0 0 25 24"><rect x="5" y="1" width="19" height="22" rx="2" fill="#21a366"/><rect x="5" y="1" width="19" height="7" rx="2" fill="#33c481"/><rect x="5" y="15" width="19" height="8" rx="1" fill="#107c41"/><rect x="0" y="6" width="12" height="12" rx="1.5" fill="#185c37"/><text x="6" y="15.5" font-size="9" font-weight="bold" fill="#fff" text-anchor="middle" font-family="Liberation Sans">x</text></svg>
<div class="r" style="left:1263px;top:1071px;width:16px;height:3px;background:#60b8f0;border-radius:2px;"></div>
<svg class="r" style="left:1695px;top:1051px;" width="14" height="9" viewBox="0 0 14 9"><path d="M1.5 7.5L7 2l5.5 5.5" fill="none" stroke="#f0f0f0" stroke-width="1.2"/></svg>
<svg class="r" style="left:1725px;top:1048px;" width="18" height="16" viewBox="0 0 18 16"><ellipse cx="9" cy="9" rx="7.5" ry="5" fill="#8a8a8a"/><path d="M2 1l14 14" stroke="#aaa" stroke-width="1.2"/></svg>
<svg class="r" style="left:1757px;top:1048px;" width="18" height="17" viewBox="0 0 18 17"><rect x="0.6" y="0.6" width="12" height="9.5" fill="none" stroke="#f0f0f0" stroke-width="1.1"/><path d="M6.5 10v4M3.5 14.5h7" stroke="#f0f0f0" stroke-width="1.1"/><rect x="12" y="1" width="4" height="4.5" fill="none" stroke="#f0f0f0" stroke-width="1"/><path d="M14 5.5v10" stroke="#f0f0f0" stroke-width="1"/></svg>
<svg class="r" style="left:1782px;top:1049px;" width="17" height="15" viewBox="0 0 17 15"><path d="M1 5h3l4-3.5v12L4 10H1z" fill="none" stroke="#f0f0f0" stroke-width="1.1"/><path d="M10.5 4.5a4 4 0 0 1 0 6M13 2.5a7 7 0 0 1 0 10" fill="none" stroke="#f0f0f0" stroke-width="1.1"/></svg>
<div class="t" style="top:1041.04px;font-size:11.8px;line-height:14.75px;color:#f2f2f2;left:1797px;width:80px;text-align:right;">14:31</div>
<div class="t" style="top:1056.65px;font-size:12.2px;line-height:15.25px;color:#f2f2f2;left:1797px;width:80px;text-align:right;">31/01/2026</div>
<svg class="r" style="left:1885px;top:1048px;" width="15" height="16" viewBox="0 0 15 16"><path d="M7.5 1.5a4.5 4.5 0 0 0-4.5 4.5v4L1 12.5h13L12 10V6a4.5 4.5 0 0 0-4.5-4.5z" fill="none" stroke="#f0f0f0" stroke-width="1.1"/><path d="M5.5 14a2 1.5 0 0 0 4 0" fill="none" stroke="#f0f0f0" stroke-width="1.1"/></svg>
</body></html>
